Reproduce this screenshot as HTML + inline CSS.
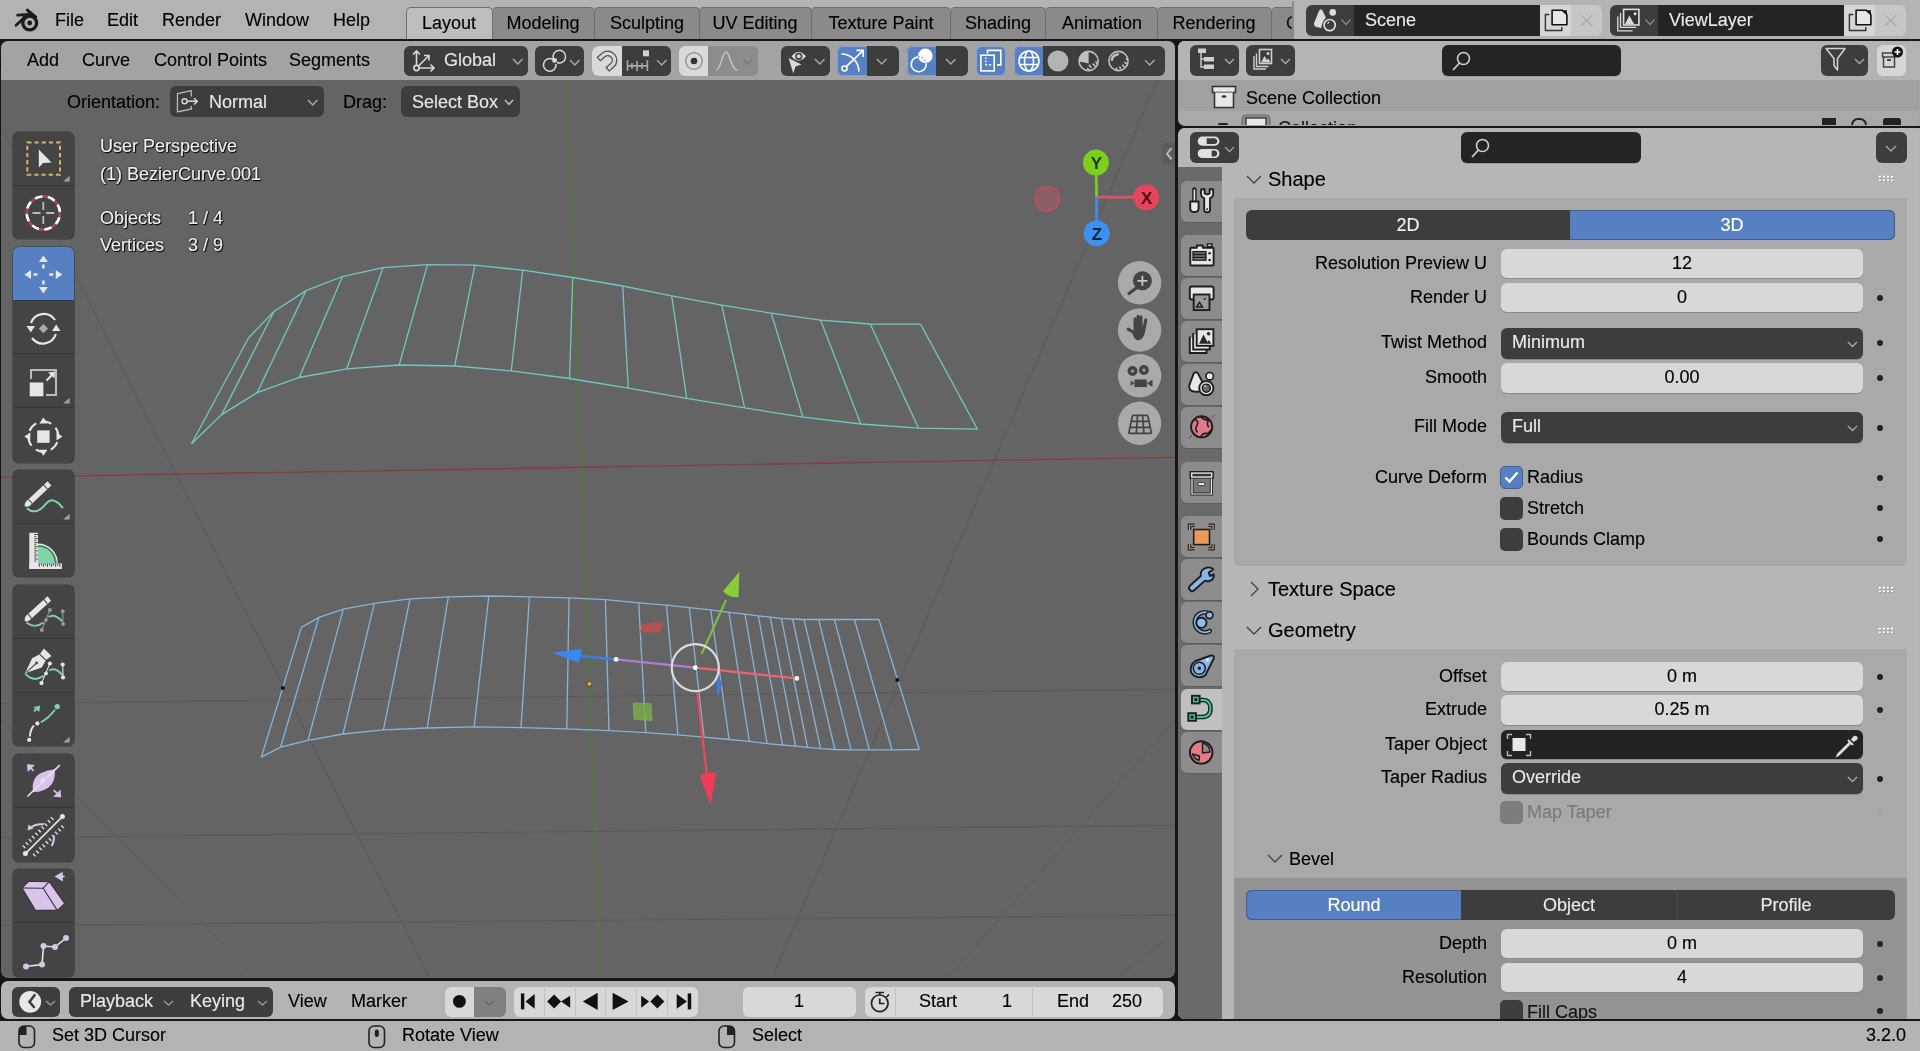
<!DOCTYPE html>
<html><head><meta charset="utf-8">
<style>
*{box-sizing:border-box;margin:0;padding:0}
html,body{width:1920px;height:1051px;overflow:hidden;background:#161616;font-family:"Liberation Sans",sans-serif;font-size:18px;color:#000}
.a{position:absolute}
.t{position:absolute;white-space:pre;line-height:1;will-change:transform;-webkit-text-stroke:0.15px currentColor}
svg{overflow:visible}
</style></head><body>
<div class="a" style="left:0.00px;top:0.00px;width:1920.00px;height:39.00px;background:#b3b3b3;border-radius:0;"></div>
<svg class="a" style="left:10px;top:5px;" width="35" height="30" viewBox="0 0 35 30"><g stroke="#1c1c1c" stroke-linecap="round" fill="none"><circle cx="19.7" cy="18" r="6.9" stroke-width="3.3"/><path d="M17.3 5.2 L25.8 12.2" stroke-width="3"/><path d="M7.6 10.1 L19.4 9.3" stroke-width="2.8"/><path d="M6.1 20.2 L13.6 13.2" stroke-width="2.8"/></g><path d="M13.5 9.6 L20 8.3 L26.5 12.5 L22 11.6 Q17 12.3 13.6 15.5 L12.3 13.2 Z" fill="#1c1c1c"/><circle cx="19.7" cy="18" r="2.4" fill="#1c1c1c"/></svg>
<div class="t" style="left:54.5px;top:11.26px;font-size:18px;color:#000;">File</div>
<div class="t" style="left:106.5px;top:11.26px;font-size:18px;color:#000;">Edit</div>
<div class="t" style="left:161.5px;top:11.26px;font-size:18px;color:#000;">Render</div>
<div class="t" style="left:244.5px;top:11.26px;font-size:18px;color:#000;">Window</div>
<div class="t" style="left:333.0px;top:11.26px;font-size:18px;color:#000;">Help</div>
<div class="a" style="left:0;top:0;width:1293px;height:39px;overflow:hidden">
<div class="a" style="left:406.00px;top:7.00px;width:86.50px;height:33.00px;background:#bdbdbd;border-radius:5px 5px 0 0;border:1.6px solid #6e6e6e;border-bottom:none;"></div>
<div class="t" style="left:249.2px;width:400px;text-align:center;top:13.56px;font-size:18px;color:#000;">Layout</div>
<div class="a" style="left:491.50px;top:7.00px;width:103.50px;height:33.00px;background:#8a8a8a;border-radius:5px 5px 0 0;border:1.6px solid #6e6e6e;border-bottom:none;"></div>
<div class="t" style="left:343.2px;width:400px;text-align:center;top:13.56px;font-size:18px;color:#000;">Modeling</div>
<div class="a" style="left:594.00px;top:7.00px;width:105.50px;height:33.00px;background:#8a8a8a;border-radius:5px 5px 0 0;border:1.6px solid #6e6e6e;border-bottom:none;"></div>
<div class="t" style="left:446.8px;width:400px;text-align:center;top:13.56px;font-size:18px;color:#000;">Sculpting</div>
<div class="a" style="left:698.50px;top:7.00px;width:113.50px;height:33.00px;background:#8a8a8a;border-radius:5px 5px 0 0;border:1.6px solid #6e6e6e;border-bottom:none;"></div>
<div class="t" style="left:555.2px;width:400px;text-align:center;top:13.56px;font-size:18px;color:#000;">UV Editing</div>
<div class="a" style="left:811.00px;top:7.00px;width:140.00px;height:33.00px;background:#8a8a8a;border-radius:5px 5px 0 0;border:1.6px solid #6e6e6e;border-bottom:none;"></div>
<div class="t" style="left:681.0px;width:400px;text-align:center;top:13.56px;font-size:18px;color:#000;">Texture Paint</div>
<div class="a" style="left:950.00px;top:7.00px;width:96.00px;height:33.00px;background:#8a8a8a;border-radius:5px 5px 0 0;border:1.6px solid #6e6e6e;border-bottom:none;"></div>
<div class="t" style="left:798.0px;width:400px;text-align:center;top:13.56px;font-size:18px;color:#000;">Shading</div>
<div class="a" style="left:1045.00px;top:7.00px;width:113.00px;height:33.00px;background:#8a8a8a;border-radius:5px 5px 0 0;border:1.6px solid #6e6e6e;border-bottom:none;"></div>
<div class="t" style="left:901.5px;width:400px;text-align:center;top:13.56px;font-size:18px;color:#000;">Animation</div>
<div class="a" style="left:1157.00px;top:7.00px;width:114.50px;height:33.00px;background:#8a8a8a;border-radius:5px 5px 0 0;border:1.6px solid #6e6e6e;border-bottom:none;"></div>
<div class="t" style="left:1014.2px;width:400px;text-align:center;top:13.56px;font-size:18px;color:#000;">Rendering</div>
<div class="a" style="left:1270.50px;top:7.00px;width:29.50px;height:33.00px;background:#8a8a8a;border-radius:5px 5px 0 0;border:1.6px solid #6e6e6e;border-bottom:none;"></div>
<div class="a" style="left:1271.5px;top:0;width:21.5px;height:39px;overflow:hidden">
<div class="t" style="left:14px;top:13.56px;font-size:18px;color:#111">Compositing</div></div>
</div>
<div class="a" style="left:1292.30px;top:1.00px;width:1.70px;height:38.00px;background:#8a8a8a;border-radius:0;"></div>
<div class="a" style="left:1305.75px;top:5.00px;width:295.95px;height:30.50px;background:#c6c6c6;border-radius:6px;"></div>
<div class="a" style="left:1305.75px;top:5.00px;width:48.25px;height:30.50px;background:#3d3d3d;border-radius:6px 0 0 6px;"></div>
<div class="a" style="left:1354.00px;top:5.00px;width:186.00px;height:30.50px;background:#242424;border-radius:0;"></div>
<div class="a" style="left:1540.00px;top:5.00px;width:31.20px;height:30.50px;background:#d6d6d6;border-radius:0;"></div>
<div class="t" style="left:1365.0px;top:11.46px;font-size:18px;color:#e8e8e8;">Scene</div>
<svg class="a" style="left:1540px;top:5px;" width="31" height="31" viewBox="0 0 31 31"><path d="M9.3 9.5 H5.4 V25.5 H21.8 V22" fill="none" stroke="#333" stroke-width="1.4"/><path d="M12.1 5.2 H22.2 L26.9 9.5 V19.7 H12.1Z" fill="#e6e6e6" stroke="#111" stroke-width="1.6" stroke-linejoin="round"/><path d="M21.5 5.2 L26.9 10.2 V5.2Z" fill="#111"/></svg>
<svg class="a" style="left:1571.2px;top:5px;" width="31" height="31" viewBox="0 0 31 31"><path d="M9.8 9.9 L21.5 21.2 M21.5 9.9 L9.8 21.2" stroke="#a8a8a8" stroke-width="1.2"/></svg>
<svg class="a" style="left:1339.5px;top:5px;" width="12" height="31" viewBox="0 0 12 31"><path d="M1.5 14.5 L6 19.5 L10.5 14.5" fill="none" stroke="#8a8a8a" stroke-width="1.3"/></svg>
<svg class="a" style="left:1305.75px;top:5px;" width="30" height="31" viewBox="0 0 30 31"><path d="M14.85 4.3 Q13.5 4.3 12.5 7 L8.3 17.5 Q7.2 21 10.5 22 L15.2 22.9 Q16 17 19.9 12.6 L16.9 6.5 Q16.2 4.3 14.85 4.3Z" fill="#dcdcdc"/><circle cx="26.75" cy="7.4" r="3.3" fill="#dcdcdc"/><circle cx="23.65" cy="20.1" r="5.6" fill="#3d3d3d" stroke="#dcdcdc" stroke-width="1.7"/><path d="M21.5 18.5 L23 17" stroke="#dcdcdc" stroke-width="1.2"/></svg>
<div class="a" style="left:1610.00px;top:5.00px;width:296.00px;height:30.50px;background:#c6c6c6;border-radius:6px;"></div>
<div class="a" style="left:1610.00px;top:5.00px;width:48.00px;height:30.50px;background:#3d3d3d;border-radius:6px 0 0 6px;"></div>
<div class="a" style="left:1658.00px;top:5.00px;width:185.80px;height:30.50px;background:#242424;border-radius:0;"></div>
<div class="a" style="left:1843.80px;top:5.00px;width:30.80px;height:30.50px;background:#d6d6d6;border-radius:0;"></div>
<div class="t" style="left:1669.0px;top:11.46px;font-size:18px;color:#e8e8e8;">ViewLayer</div>
<svg class="a" style="left:1843.8px;top:5px;" width="31" height="31" viewBox="0 0 31 31"><path d="M9.3 9.5 H5.4 V25.5 H21.8 V22" fill="none" stroke="#333" stroke-width="1.4"/><path d="M12.1 5.2 H22.2 L26.9 9.5 V19.7 H12.1Z" fill="#e6e6e6" stroke="#111" stroke-width="1.6" stroke-linejoin="round"/><path d="M21.5 5.2 L26.9 10.2 V5.2Z" fill="#111"/></svg>
<svg class="a" style="left:1874.6px;top:5px;" width="31" height="31" viewBox="0 0 31 31"><path d="M9.8 9.9 L21.5 21.2 M21.5 9.9 L9.8 21.2" stroke="#a8a8a8" stroke-width="1.2"/></svg>
<svg class="a" style="left:1643.5px;top:5px;" width="12" height="31" viewBox="0 0 12 31"><path d="M1.5 14.5 L6 19.5 L10.5 14.5" fill="none" stroke="#8a8a8a" stroke-width="1.3"/></svg>
<svg class="a" style="left:1610px;top:5px;" width="30" height="31" viewBox="0 0 30 31"><path d="M7.8 11.5 V25.9 H22.6" fill="none" stroke="#dcdcdc" stroke-width="1.3"/><path d="M10.5 8 V22.4 H26.1" fill="none" stroke="#dcdcdc" stroke-width="1.3"/><rect x="13.6" y="4.4" width="15.3" height="15.6" fill="#333" stroke="#dcdcdc" stroke-width="1.6"/><path d="M15 19.2 L19.3 10.5 L23.5 18 L24.5 19.2Z" fill="#dcdcdc"/><circle cx="25.1" cy="8.7" r="1.5" fill="#dcdcdc"/></svg>
<div class="a" style="left:1.00px;top:41.00px;width:1174.00px;height:937.00px;background:#646464;border-radius:7px;"></div>
<div class="a" style="left:1.00px;top:41.00px;width:1174.00px;height:39.00px;background:#a3a3a3;border-radius:7px 7px 0 0;"></div>
<div class="a" style="left:1178.00px;top:41.00px;width:742.00px;height:85.00px;background:#a5a5a5;border-radius:7px 0 0 7px;"></div>
<div class="a" style="left:1178.00px;top:41.00px;width:742.00px;height:39.00px;background:#b3b3b3;border-radius:7px 0 0 0;"></div>
<div class="a" style="left:1178.00px;top:128.00px;width:742.00px;height:891.00px;background:#b3b3b3;border-radius:7px 0 0 7px;"></div>
<div class="a" style="left:1.00px;top:981.00px;width:1174.00px;height:38.00px;background:#b3b3b3;border-radius:7px;"></div>
<div class="a" style="left:0.00px;top:1021.00px;width:1920.00px;height:30.00px;background:#b3b3b3;border-radius:0;"></div>
<div class="t" style="left:-4.5px;top:50.86px;font-size:18px;color:#000;">t</div>
<div class="t" style="left:26.5px;top:50.86px;font-size:18px;color:#000;">Add</div>
<div class="t" style="left:81.5px;top:50.86px;font-size:18px;color:#000;">Curve</div>
<div class="t" style="left:153.5px;top:50.86px;font-size:18px;color:#000;">Control Points</div>
<div class="t" style="left:288.5px;top:50.86px;font-size:18px;color:#000;">Segments</div>
<div class="a" style="left:404.00px;top:45.50px;width:124.00px;height:30.00px;background:#3d3d3d;border-radius:6px;"></div>
<svg class="a" style="left:404px;top:45.5px;" width="40" height="30" viewBox="0 0 40 30"><g stroke="#d9d9d9" stroke-width="1.6" fill="none"><path d="M12.5 22 V5 M9 8.5 L12.5 5 L16 8.5"/><path d="M12.5 22 H30 M26.5 18.5 L30 22 L26.5 25.5"/><path d="M12.5 22 L25 9.5 M20 9.5 H25 V14.5"/><circle cx="12.5" cy="22" r="2.6" fill="#3d3d3d"/></g></svg>
<div class="t" style="left:443.5px;top:50.96px;font-size:18px;color:#e6e6e6;">Global</div>
<svg class="a" style="left:511.5px;top:57.5px;" width="11.5" height="7" viewBox="0 0 11.5 7"><path d="M1 1 L5.75 6 L10.5 1" fill="none" stroke="#a8a8a8" stroke-width="1.4"/></svg>
<div class="a" style="left:535.00px;top:45.50px;width:49.00px;height:30.00px;background:#3d3d3d;border-radius:6px;"></div>
<svg class="a" style="left:535px;top:45.5px;" width="49" height="30" viewBox="0 0 49 30"><g stroke="#d9d9d9" stroke-width="1.5" fill="none"><path d="M18 13.5 A6.3 6.3 0 1 0 21 18"/><path d="M18.5 13 A6.3 6.3 0 1 1 22 16.5"/></g><circle cx="19.6" cy="14.4" r="2.4" fill="#d9d9d9"/></svg>
<svg class="a" style="left:569px;top:58.5px;" width="11.5" height="7" viewBox="0 0 11.5 7"><path d="M1 1 L5.75 6 L10.5 1" fill="none" stroke="#a8a8a8" stroke-width="1.4"/></svg>
<div class="a" style="left:591.50px;top:45.50px;width:79.50px;height:30.00px;background:#3d3d3d;border-radius:6px;"></div>
<div class="a" style="left:591.50px;top:45.50px;width:30.00px;height:30.00px;background:#d9d9d9;border-radius:6px 0 0 6px;"></div>
<svg class="a" style="left:591.5px;top:45.5px;" width="30" height="30" viewBox="0 0 30 30"><path d="M6.9 13 L11.4 9.1 A6.7 6.7 0 0 1 20.2 19.3 L15.7 23.2" fill="none" stroke="#555" stroke-width="5.8"/><path d="M6.9 13 L11.4 9.1 A6.7 6.7 0 0 1 20.2 19.3 L15.7 23.2" fill="none" stroke="#d9d9d9" stroke-width="3.2" transform="translate(0,0)"/><path d="M5 10.8 L8.8 15.2 M13.8 21 L17.6 25.4" stroke="#555" stroke-width="1.3"/></svg>
<svg class="a" style="left:621.5px;top:45.5px;" width="36" height="30" viewBox="0 0 36 30"><g stroke="#aaa" stroke-width="1.6" fill="none"><path d="M5.5 14 V25 M5.5 19.9 H25.4 M25.4 14 V25 M10 17 V23 M15 15 V25 M20 17 V23"/></g><rect x="21" y="4.3" width="6" height="6" fill="#d0d0d0"/></svg>
<svg class="a" style="left:656px;top:58.5px;" width="11.5" height="7" viewBox="0 0 11.5 7"><path d="M1 1 L5.75 6 L10.5 1" fill="none" stroke="#a8a8a8" stroke-width="1.4"/></svg>
<div class="a" style="left:678.50px;top:45.50px;width:79.50px;height:30.00px;background:#8c8c8c;border-radius:6px;"></div>
<div class="a" style="left:678.50px;top:45.50px;width:29.50px;height:30.00px;background:#d9d9d9;border-radius:6px 0 0 6px;"></div>
<svg class="a" style="left:678.5px;top:45.5px;" width="30" height="30" viewBox="0 0 30 30"><circle cx="15" cy="15" r="8.3" fill="none" stroke="#8a8a8a" stroke-width="1.3"/><circle cx="15" cy="15" r="3.3" fill="#333"/></svg>
<svg class="a" style="left:708px;top:45.5px;" width="50" height="30" viewBox="0 0 50 30"><path d="M8 24.5 C13 24 14 6 18 6 C22 6 23 24 29.5 24.5" fill="none" stroke="#c6c6c6" stroke-width="1.5"/></svg>
<svg class="a" style="left:742px;top:57.5px;" width="11.5" height="7" viewBox="0 0 11.5 7"><path d="M1 1 L5.75 6 L10.5 1" fill="none" stroke="#7a7a7a" stroke-width="1.4"/></svg>
<div class="a" style="left:781.00px;top:45.50px;width:49.00px;height:30.00px;background:#3d3d3d;border-radius:6px;"></div>
<svg class="a" style="left:781px;top:45.5px;" width="49" height="30" viewBox="0 0 49 30"><path d="M10.5 10.3 Q17.5 1.5 25 10.3 Q17.5 19 10.5 10.3 Z" fill="#d9d9d9"/><circle cx="17.8" cy="10.3" r="3.6" fill="#3d3d3d"/><circle cx="17.8" cy="10.3" r="2" fill="#d9d9d9"/><path d="M7.5 12 L20.5 18.5 L14.5 20.5 L12.3 27.5 Z" fill="#d9d9d9"/></svg>
<svg class="a" style="left:814px;top:57.5px;" width="11.5" height="7" viewBox="0 0 11.5 7"><path d="M1 1 L5.75 6 L10.5 1" fill="none" stroke="#a8a8a8" stroke-width="1.4"/></svg>
<div class="a" style="left:837.00px;top:45.50px;width:62.00px;height:30.00px;background:#3d3d3d;border-radius:6px;"></div>
<div class="a" style="left:837.00px;top:45.50px;width:30.00px;height:30.00px;background:#5680c2;border-radius:6px 0 0 6px;border:1px solid #87a3d3;border-right:none"></div>
<svg class="a" style="left:837px;top:45.5px;" width="30" height="30" viewBox="0 0 30 30"><g stroke="#fff" stroke-width="1.6" fill="none"><path d="M4.4 8 A17.5 17.5 0 0 1 21.9 25.5"/><path d="M9.3 20.6 L26.2 4.4 M19.5 4.4 H26.2 V11"/><circle cx="7.5" cy="22.5" r="2.5"/></g></svg>
<svg class="a" style="left:875.5px;top:57.5px;" width="11.5" height="7" viewBox="0 0 11.5 7"><path d="M1 1 L5.75 6 L10.5 1" fill="none" stroke="#a8a8a8" stroke-width="1.4"/></svg>
<div class="a" style="left:906.50px;top:45.50px;width:61.50px;height:30.00px;background:#3d3d3d;border-radius:6px;"></div>
<div class="a" style="left:906.50px;top:45.50px;width:29.50px;height:30.00px;background:#5680c2;border-radius:6px 0 0 6px;border:1px solid #87a3d3;border-right:none"></div>
<svg class="a" style="left:906.5px;top:45.5px;" width="30" height="30" viewBox="0 0 30 30"><circle cx="18.3" cy="9.8" r="7.3" fill="#fff"/><path d="M11.07 10.83 A7.5 7.5 0 1 0 19.1 17.06" fill="none" stroke="#fff" stroke-width="1.6"/><path d="M11.07 10.83 A7.5 7.5 0 0 1 19.1 17.06" fill="none" stroke="#5680c2" stroke-width="1.2" stroke-dasharray="1.6 1.8"/></svg>
<svg class="a" style="left:944.5px;top:57.5px;" width="11.5" height="7" viewBox="0 0 11.5 7"><path d="M1 1 L5.75 6 L10.5 1" fill="none" stroke="#a8a8a8" stroke-width="1.4"/></svg>
<div class="a" style="left:975.50px;top:45.50px;width:30.00px;height:30.00px;background:#5680c2;border-radius:6px;border:1px solid #87a3d3"></div>
<svg class="a" style="left:975.5px;top:45.5px;" width="30" height="30" viewBox="0 0 30 30"><path d="M11.5 7.5 V4.4 H24.8 V18.9 H21" fill="none" stroke="#fff" stroke-width="1.6"/><rect x="4.9" y="9.2" width="13.3" height="15.7" fill="none" stroke="#fff" stroke-width="1.6"/><path d="M9.8 11.6 V13 M9.8 14.6 V16.3 M9.8 17.8 V18.9 H11.2 M12.8 18.9 H15.3" fill="none" stroke="#fff" stroke-width="1.4"/></svg>
<div class="a" style="left:1013.50px;top:45.50px;width:151.00px;height:30.00px;background:#3d3d3d;border-radius:6px;"></div>
<div class="a" style="left:1013.50px;top:45.50px;width:29.50px;height:30.00px;background:#5680c2;border-radius:6px 0 0 6px;border:1px solid #87a3d3;border-right:none"></div>
<svg class="a" style="left:1013.5px;top:45.5px;" width="30" height="30" viewBox="0 0 30 30"><g fill="none" stroke="#fff" stroke-width="1.6"><circle cx="15" cy="15" r="10"/><ellipse cx="15" cy="15" rx="4.5" ry="10"/><path d="M5.5 11.5 H24.5 M5.5 18.5 H24.5"/></g></svg>
<div class="a" style="left:1073.00px;top:48.50px;width:0.80px;height:24.00px;background:#414141;border-radius:0;"></div>
<div class="a" style="left:1103.00px;top:48.50px;width:0.80px;height:24.00px;background:#414141;border-radius:0;"></div>
<div class="a" style="left:1133.00px;top:48.50px;width:0.80px;height:24.00px;background:#414141;border-radius:0;"></div>
<svg class="a" style="left:1043px;top:45.5px;" width="30" height="30" viewBox="0 0 30 30"><circle cx="15" cy="15" r="10.5" fill="#b3b3b3"/></svg>
<svg class="a" style="left:1073px;top:45.5px;" width="30" height="30" viewBox="0 0 30 30"><circle cx="15.6" cy="15" r="9.6" fill="none" stroke="#c0c0c0" stroke-width="1.6"/><path d="M15.6 17.5 V5.4 A9.6 9.6 0 0 0 6.1 15.6 Z" fill="#c0c0c0"/><path d="M15.9 18.9 L18.5 21.8 M19.6 17.5 L22.2 20.4 M22.5 15.6 L24.3 17.8 M14.1 22.2 L16.3 24" stroke="#c0c0c0" stroke-width="1.6"/></svg>
<svg class="a" style="left:1103px;top:45.5px;" width="30" height="30" viewBox="0 0 30 30"><circle cx="15.5" cy="15" r="9.6" fill="none" stroke="#c0c0c0" stroke-width="1.6"/><path d="M8.9 13.8 Q9.5 9.5 14.8 8.3" stroke="#c0c0c0" stroke-width="2.6" fill="none" stroke-linecap="round"/><path d="M12.6 21.8 L14.4 23.7 M16.2 20.7 L18 22.6 M19.1 18.9 L21.7 21.1 M21.3 16 L23.9 18.2 M22.8 12.4 L24.6 13.8" stroke="#c0c0c0" stroke-width="1.6"/></svg>
<svg class="a" style="left:1143.5px;top:58.5px;" width="11.5" height="7" viewBox="0 0 11.5 7"><path d="M1 1 L5.75 6 L10.5 1" fill="none" stroke="#a8a8a8" stroke-width="1.4"/></svg>
<div class="t" style="left:66.5px;top:92.66px;font-size:18px;color:#000;">Orientation:</div>
<div class="a" style="left:169.50px;top:86.00px;width:154.50px;height:30.50px;background:#3d3d3d;border-radius:6px;"></div>
<svg class="a" style="left:169.5px;top:86px;" width="36" height="30" viewBox="0 0 36 30"><path d="M21.3 10.5 V4.7 L7.45 7.6 V25.9 L21.3 23 V20.1" fill="none" stroke="#bbb" stroke-width="1.3" stroke-linejoin="round"/><circle cx="14.6" cy="15.3" r="2.5" fill="none" stroke="#d9d9d9" stroke-width="1.4"/><path d="M17.1 15.3 H27.3 M24 12.2 L27.3 15.3 L24 18.4" fill="none" stroke="#d9d9d9" stroke-width="1.4"/></svg>
<div class="t" style="left:208.5px;top:92.66px;font-size:18px;color:#e6e6e6;">Normal</div>
<svg class="a" style="left:307px;top:98.5px;" width="11.5" height="7" viewBox="0 0 11.5 7"><path d="M1 1 L5.75 6 L10.5 1" fill="none" stroke="#a8a8a8" stroke-width="1.4"/></svg>
<div class="t" style="left:342.5px;top:92.66px;font-size:18px;color:#000;">Drag:</div>
<div class="a" style="left:401.00px;top:86.00px;width:119.00px;height:30.50px;background:#3d3d3d;border-radius:6px;"></div>
<div class="t" style="left:412.0px;top:92.66px;font-size:18px;color:#e6e6e6;">Select Box</div>
<svg class="a" style="left:504px;top:98.5px;" width="10" height="6.5" viewBox="0 0 10 6.5"><path d="M1 1 L5.0 5.5 L9 1" fill="none" stroke="#c8c8c8" stroke-width="1.4"/></svg>
<svg class="a" style="left:0;top:0;overflow:hidden;clip-path:inset(80px 1px 73px 1px round 0 0 7px 7px)" width="1176" height="1051" viewBox="0 0 1176 1051"><line x1="0" y1="123" x2="429.2" y2="977.2" stroke="#5a5a5a" stroke-width="1"/><line x1="0" y1="718.4" x2="255.6" y2="977.2" stroke="#5a5a5a" stroke-width="1"/><line x1="0" y1="703.6" x2="1175" y2="689.2" stroke="#5a5a5a" stroke-width="1"/><line x1="0" y1="837.6" x2="1175" y2="825.3" stroke="#5a5a5a" stroke-width="1"/><line x1="0" y1="925.5" x2="1175" y2="915.3" stroke="#5a5a5a" stroke-width="1"/><line x1="1174.2" y1="41" x2="772.6" y2="977" stroke="#5a5a5a" stroke-width="1"/><line x1="1174.3" y1="720" x2="948.3" y2="977" stroke="#5a5a5a" stroke-width="1"/><line x1="1174.3" y1="933.2" x2="1117.8" y2="977" stroke="#5a5a5a" stroke-width="1"/><line x1="0" y1="477.1" x2="1175" y2="457.3" stroke="#8a3b42" stroke-width="1.3"/><line x1="564.7" y1="41" x2="600.5" y2="977" stroke="#4e7d2c" stroke-width="1.3"/><polyline points="248.8,337.5 274.0,311.5 306.0,290.6 342.5,276.5 383.0,267.7 427.5,264.6 474.8,265.2 522.7,270.2 572.7,277.5 622.7,286.0 671.7,295.8 721.7,305.2 771.2,313.1 820.6,320.2 870.2,324.0 920.6,324.2" fill="none" stroke="#73c6c6" stroke-width="1.3"/><polyline points="191.5,443.8 221.7,414.6 257.1,392.7 299.2,377.5 346.7,368.8 399.2,365.0 454.6,366.0 511.2,370.8 569.6,378.5 628.3,388.1 686.7,398.3 744.6,407.9 802.9,417.1 860.8,424.0 918.5,428.1 977.5,429.2" fill="none" stroke="#73c6c6" stroke-width="1.3"/><line x1="248.75" y1="337.5" x2="191.5" y2="443.75" stroke="#73c6c6" stroke-width="1.3"/><line x1="274.0" y1="311.5" x2="221.7" y2="414.6" stroke="#73c6c6" stroke-width="1.3"/><line x1="306" y1="290.6" x2="257.1" y2="392.7" stroke="#73c6c6" stroke-width="1.3"/><line x1="342.5" y1="276.5" x2="299.2" y2="377.5" stroke="#73c6c6" stroke-width="1.3"/><line x1="383" y1="267.7" x2="346.7" y2="368.75" stroke="#73c6c6" stroke-width="1.3"/><line x1="427.5" y1="264.6" x2="399.2" y2="365" stroke="#73c6c6" stroke-width="1.3"/><line x1="474.8" y1="265.2" x2="454.6" y2="366" stroke="#73c6c6" stroke-width="1.3"/><line x1="522.7" y1="270.2" x2="511.25" y2="370.8" stroke="#73c6c6" stroke-width="1.3"/><line x1="572.7" y1="277.5" x2="569.6" y2="378.5" stroke="#73c6c6" stroke-width="1.3"/><line x1="622.7" y1="286" x2="628.3" y2="388.1" stroke="#73c6c6" stroke-width="1.3"/><line x1="671.7" y1="295.8" x2="686.7" y2="398.3" stroke="#73c6c6" stroke-width="1.3"/><line x1="721.7" y1="305.2" x2="744.6" y2="407.9" stroke="#73c6c6" stroke-width="1.3"/><line x1="771.25" y1="313.1" x2="802.9" y2="417.1" stroke="#73c6c6" stroke-width="1.3"/><line x1="820.6" y1="320.2" x2="860.8" y2="424" stroke="#73c6c6" stroke-width="1.3"/><line x1="870.2" y1="324" x2="918.5" y2="428.1" stroke="#73c6c6" stroke-width="1.3"/><line x1="920.6" y1="324.2" x2="977.5" y2="429.2" stroke="#73c6c6" stroke-width="1.3"/><polyline points="301.4,627.4 318.9,617.4 343.3,609.2 374.3,603.3 410.0,598.8 448.3,596.8 488.8,596.0 529.4,596.8 569.0,597.9 605.4,599.7 638.7,602.8 666.5,605.2 689.3,607.6 710.7,609.9 729.0,612.3 745.0,614.2 758.3,615.9 770.2,617.1 781.4,618.3 792.6,619.0 804.0,619.5 818.7,619.5 834.4,619.5 854.4,619.5 878.9,619.5" fill="none" stroke="#86b3d9" stroke-width="1.3"/><polyline points="261.3,757.2 280.6,747.2 308.0,740.4 343.0,734.0 383.4,729.8 427.2,728.0 474.2,726.9 521.0,727.6 566.8,728.9 609.0,730.7 645.8,732.6 677.9,734.8 704.1,737.2 729.1,739.5 749.3,741.4 767.1,743.6 782.6,745.0 795.6,746.2 807.5,747.4 820.6,748.6 834.9,749.5 851.0,749.8 869.4,749.8 892.0,749.8 919.3,749.5" fill="none" stroke="#86b3d9" stroke-width="1.3"/><line x1="301.4" y1="627.4" x2="261.3" y2="757.2" stroke="#86b3d9" stroke-width="1.3"/><line x1="318.9" y1="617.4" x2="280.6" y2="747.2" stroke="#86b3d9" stroke-width="1.3"/><line x1="343.3" y1="609.2" x2="308" y2="740.4" stroke="#86b3d9" stroke-width="1.3"/><line x1="374.3" y1="603.3" x2="343" y2="734" stroke="#86b3d9" stroke-width="1.3"/><line x1="410" y1="598.8" x2="383.4" y2="729.8" stroke="#86b3d9" stroke-width="1.3"/><line x1="448.3" y1="596.8" x2="427.2" y2="728" stroke="#86b3d9" stroke-width="1.3"/><line x1="488.8" y1="596" x2="474.2" y2="726.9" stroke="#86b3d9" stroke-width="1.3"/><line x1="529.4" y1="596.8" x2="521" y2="727.6" stroke="#86b3d9" stroke-width="1.3"/><line x1="569" y1="597.9" x2="566.8" y2="728.9" stroke="#86b3d9" stroke-width="1.3"/><line x1="605.4" y1="599.7" x2="609" y2="730.7" stroke="#86b3d9" stroke-width="1.3"/><line x1="638.7" y1="602.8" x2="645.8" y2="732.6" stroke="#86b3d9" stroke-width="1.3"/><line x1="666.5" y1="605.2" x2="677.9" y2="734.8" stroke="#86b3d9" stroke-width="1.3"/><line x1="689.3" y1="607.6" x2="704.1" y2="737.2" stroke="#86b3d9" stroke-width="1.3"/><line x1="710.7" y1="609.9" x2="729.1" y2="739.5" stroke="#86b3d9" stroke-width="1.3"/><line x1="729" y1="612.3" x2="749.3" y2="741.4" stroke="#86b3d9" stroke-width="1.3"/><line x1="745" y1="614.2" x2="767.1" y2="743.6" stroke="#86b3d9" stroke-width="1.3"/><line x1="758.3" y1="615.9" x2="782.6" y2="745" stroke="#86b3d9" stroke-width="1.3"/><line x1="770.2" y1="617.1" x2="795.6" y2="746.2" stroke="#86b3d9" stroke-width="1.3"/><line x1="781.4" y1="618.3" x2="807.5" y2="747.4" stroke="#86b3d9" stroke-width="1.3"/><line x1="792.6" y1="619" x2="820.6" y2="748.6" stroke="#86b3d9" stroke-width="1.3"/><line x1="804" y1="619.5" x2="834.9" y2="749.5" stroke="#86b3d9" stroke-width="1.3"/><line x1="818.7" y1="619.5" x2="851" y2="749.8" stroke="#86b3d9" stroke-width="1.3"/><line x1="834.4" y1="619.5" x2="869.4" y2="749.8" stroke="#86b3d9" stroke-width="1.3"/><line x1="854.4" y1="619.5" x2="892" y2="749.8" stroke="#86b3d9" stroke-width="1.3"/><line x1="878.9" y1="619.5" x2="919.3" y2="749.5" stroke="#86b3d9" stroke-width="1.3"/><circle cx="282.8" cy="687.9" r="2" fill="#111"/><circle cx="897.2" cy="680.1" r="2" fill="#111"/><circle cx="589.4" cy="683.8" r="2.5" fill="#f0a040" stroke="#222" stroke-width="0.6"/><path d="M642.3 624 L663.7 621.8 L660 632.5 L639.5 632.5Z" fill="#c05050" opacity="0.85"/><path d="M633.2 702.7 L651 703.7 L652.2 720.5 L634 719.5Z" fill="#7aa84a" opacity="0.85" stroke="#8cc05a" stroke-width="0.6"/><path d="M716 676 Q722 680 722 684 L718 697 Q716 690 716 676Z" fill="#4a7ad0"/><line x1="695.3" y1="667.7" x2="616.1" y2="659.4" stroke="#b07ad8" stroke-width="2.2"/><line x1="616.1" y1="659.4" x2="580" y2="656" stroke="#3a7fe8" stroke-width="2.4"/><path d="M551.9 652.7 L581.6 648.8 L579.2 663Z" fill="#3a88ee"/><line x1="695.3" y1="667.7" x2="796.8" y2="678.4" stroke="#f0606e" stroke-width="2.2"/><line x1="701.7" y1="653.9" x2="726" y2="600" stroke="#7ac040" stroke-width="2.2"/><path d="M739.3 571.9 L723.1 591 Q728 598 738.6 597Z" fill="#88cc38"/><line x1="697" y1="690.8" x2="707" y2="776" stroke="#e84a60" stroke-width="2.2"/><path d="M710.7 805 L699.8 775.5 Q708 771 716.2 773Z" fill="#f03c58"/><circle cx="695.3" cy="667.7" r="23.5" fill="none" stroke="#dcdcdc" stroke-width="2.2"/><circle cx="695.3" cy="667.7" r="2.4" fill="#fff"/><circle cx="616.1" cy="659.4" r="2.4" fill="#fff"/><circle cx="796.8" cy="678.4" r="2.4" fill="#fff"/><circle cx="1047.2" cy="198.7" r="12.2" fill="#9a5c66" stroke="#d84a62" stroke-width="1.6" opacity="0.8"/><line x1="1096.6" y1="197.2" x2="1096" y2="162.6" stroke="#7ac828" stroke-width="2.8"/><line x1="1096.6" y1="197.2" x2="1146.1" y2="197.2" stroke="#e0506a" stroke-width="2.8"/><line x1="1096.6" y1="197.2" x2="1096.6" y2="233.4" stroke="#3c8ee6" stroke-width="2.8"/><circle cx="1095.9" cy="162.6" r="13" fill="#7ccf1c"/><circle cx="1146.1" cy="197.2" r="13" fill="#e8445e"/><circle cx="1096.6" cy="233.4" r="13" fill="#3e90ee"/><text x="1096.3" y="168.9" text-anchor="middle" font-family="Liberation Sans" font-weight="bold" font-size="17" fill="#1c3a04">Y</text><text x="1146.6" y="203.5" text-anchor="middle" font-family="Liberation Sans" font-weight="bold" font-size="17" fill="#4e0c16">X</text><text x="1097" y="239.70000000000002" text-anchor="middle" font-family="Liberation Sans" font-weight="bold" font-size="17" fill="#08264e">Z</text><circle cx="1139.6" cy="282.8" r="21.7" fill="#a9a9a9"/><circle cx="1139.6" cy="330" r="21.7" fill="#a9a9a9"/><circle cx="1139.6" cy="375.7" r="21.7" fill="#a9a9a9"/><circle cx="1139.6" cy="423.2" r="21.7" fill="#a9a9a9"/><path d="M1167 143 H1176 V164.5 H1167 Q1162 164.5 1162 160 V147.5 Q1162 143 1167 143 Z" fill="#5c5c5c"/><path d="M1171.5 148 L1167 153.7 L1171.5 159.4" fill="none" stroke="#bbb" stroke-width="1.9"/></svg>
<svg class="a" style="left:1117.9px;top:261.1px;" width="44" height="44" viewBox="0 0 44 44"><circle cx="24.4" cy="19.8" r="9.5" fill="#444444"/><path d="M24.4 14.8 V24.8 M19.4 19.8 H29.4" stroke="#c8c8c8" stroke-width="1.8"/><path d="M19 26.5 L11 32.5" stroke="#444444" stroke-width="3.2" stroke-linecap="round"/></svg>
<svg class="a" style="left:1117.9px;top:308.3px;" width="44" height="44" viewBox="0 0 44 44"><path d="M14.5 25.5 L9.5 22.5 Q8 21.3 9 20.2 Q10.2 19 11.8 20.2 L15.5 22.5 V11 Q15.5 9.3 17 9.3 Q18.5 9.3 18.5 11 V19 V8.3 Q18.5 6.8 20 6.8 Q21.5 6.8 21.5 8.3 V19 V8.8 Q21.5 7.3 23 7.3 Q24.5 7.3 24.5 8.8 V19.5 L26.3 11.5 Q26.8 10 28.3 10.4 Q29.7 10.9 29.3 12.4 L27.2 23 Q26 31 20.5 32.3 Q16.5 32.5 14.5 25.5Z" fill="#444444"/></svg>
<svg class="a" style="left:1117.9px;top:354px;" width="44" height="44" viewBox="0 0 44 44"><circle cx="14.5" cy="17" r="5" fill="#444444"/><circle cx="25.9" cy="16" r="5" fill="#444444"/><circle cx="14.5" cy="17" r="1.5" fill="#aaa"/><circle cx="25.9" cy="16" r="1.5" fill="#aaa"/><rect x="16.4" y="25.5" width="12.4" height="7.6" fill="#444444"/><path d="M28.8 29.3 L34.5 25.5 V33.1Z" fill="#444444"/><path d="M13.5 27 V31.5 M13.5 29.3 H16.4" stroke="#444444" stroke-width="1.6"/></svg>
<svg class="a" style="left:1117.9px;top:401.5px;" width="44" height="44" viewBox="0 0 44 44"><path d="M14.5 13.3 H29.7 M13.2 19.3 H31.0 M12.0 25.4 H32.2 M10.7 31.4 H33.5 M14.5 13.3 L10.7 31.4 M19.6 13.3 L18.3 31.4 M24.6 13.3 L25.9 31.4 M29.7 13.3 L33.5 31.4" fill="none" stroke="#444" stroke-width="1.7"/></svg>
<div class="t" style="left:99.5px;top:136.66px;font-size:18px;color:#f0f0f0;text-shadow:0 0 2px #000,1px 1px 1px #000">User Perspective</div>
<div class="t" style="left:99.5px;top:165.16px;font-size:18px;color:#f0f0f0;text-shadow:0 0 2px #000,1px 1px 1px #000">(1) BezierCurve.001</div>
<div class="t" style="left:99.5px;top:208.96px;font-size:18px;color:#f0f0f0;text-shadow:0 0 2px #000,1px 1px 1px #000">Objects</div>
<div class="t" style="left:188.0px;top:208.96px;font-size:18px;color:#f0f0f0;text-shadow:0 0 2px #000,1px 1px 1px #000">1 / 4</div>
<div class="t" style="left:99.5px;top:235.56px;font-size:18px;color:#f0f0f0;text-shadow:0 0 2px #000,1px 1px 1px #000">Vertices</div>
<div class="t" style="left:188.0px;top:235.56px;font-size:18px;color:#f0f0f0;text-shadow:0 0 2px #000,1px 1px 1px #000">3 / 9</div>
<div class="a" style="left:12.5px;top:132.3px;width:61px;height:107.0px;background:#444444;border-radius:6px;overflow:hidden;box-shadow:0 0 0 0.6px #3a3a3a">
<div class="a" style="left:0;top:52.29999999999998px;width:61px;height:1px;background:#383838"></div>
</div>
<div class="a" style="left:12.5px;top:247.2px;width:61px;height:215.8px;background:#444444;border-radius:6px;overflow:hidden;box-shadow:0 0 0 0.6px #3a3a3a">
<div class="a" style="left:0;top:0.0px;width:61px;height:53.5px;background:#5680c2"></div>
<div class="a" style="left:0;top:53.0px;width:61px;height:1px;background:#383838"></div>
<div class="a" style="left:0;top:106.30000000000001px;width:61px;height:1px;background:#383838"></div>
<div class="a" style="left:0;top:160.2px;width:61px;height:1px;background:#383838"></div>
</div>
<div class="a" style="left:12.5px;top:470px;width:61px;height:106.79999999999995px;background:#444444;border-radius:6px;overflow:hidden;box-shadow:0 0 0 0.6px #3a3a3a">
<div class="a" style="left:0;top:52.799999999999955px;width:61px;height:1px;background:#383838"></div>
</div>
<div class="a" style="left:12.5px;top:584.9px;width:61px;height:160.80000000000007px;background:#444444;border-radius:6px;overflow:hidden;box-shadow:0 0 0 0.6px #3a3a3a">
<div class="a" style="left:0;top:53.0px;width:61px;height:1px;background:#383838"></div>
<div class="a" style="left:0;top:107.10000000000002px;width:61px;height:1px;background:#383838"></div>
</div>
<div class="a" style="left:12.5px;top:754.2px;width:61px;height:107.5px;background:#444444;border-radius:6px;overflow:hidden;box-shadow:0 0 0 0.6px #3a3a3a">
<div class="a" style="left:0;top:52.89999999999998px;width:61px;height:1px;background:#383838"></div>
</div>
<div class="a" style="left:12.5px;top:869px;width:61px;height:108px;background:#444444;border-radius:6px;overflow:hidden;box-shadow:0 0 0 0.6px #3a3a3a">
<div class="a" style="left:0;top:53.39999999999998px;width:61px;height:1px;background:#383838"></div>
</div>
<svg class="a" style="left:12.5px;top:132.3px;" width="61" height="54" viewBox="0 0 61 54"><rect x="14.3" y="10.5" width="32.7" height="32.2" fill="none" stroke="#d8b26a" stroke-width="2" stroke-dasharray="4.2 3"/><path d="M25.8 17.5 L25.8 35.5 L30 31 L38.5 30.5 Z" fill="#e6e6e6"/></svg>
<svg class="a" style="left:12.5px;top:132.3px;" width="61" height="54" viewBox="0 0 61 54"><path d="M50.3 49.4 L56.6 43.7 L56.6 49.4 Z" fill="#a0a0a0"/></svg>
<svg class="a" style="left:12.5px;top:185.1px;" width="61" height="54" viewBox="0 0 61 54"><circle cx="30.3" cy="28" r="16.6" fill="none" stroke="#a24a58" stroke-width="2.6"/><circle cx="30.3" cy="28" r="16.6" fill="none" stroke="#fff" stroke-width="2.6" stroke-dasharray="7.5 5.5" transform="rotate(-30 30.3 28)"/><path d="M19.5 28 H27.5 M33.2 28 H41.2 M30.3 17.1 V25.1 M30.3 30.9 V38.9" stroke="#bbb" stroke-width="1.8"/></svg>
<svg class="a" style="left:12.5px;top:247.2px;" width="61" height="54" viewBox="0 0 61 54"><g fill="#e6e6e6"><path d="M30.4 8.6 L25.9 15 H34.9Z M30.4 46.4 L25.9 40 H34.9Z M11.5 27.5 L18 23 V32Z M49.3 27.5 L42.8 23 V32Z"/></g><path d="M30.4 17.5 V21.5 M30.4 33.5 V37.5 M20.5 27.5 H24.5 M36.3 27.5 H40.3" stroke="#e6e6e6" stroke-width="2.6"/></svg>
<svg class="a" style="left:12.5px;top:300.7px;" width="61" height="54" viewBox="0 0 61 54"><path d="M30.4 23 L35 27.6 L30.4 32.2 L25.8 27.6Z" fill="#aaa"/><path d="M18 22 A13.5 13.5 0 0 1 42 19" fill="none" stroke="#e6e6e6" stroke-width="2.2"/><path d="M42.8 33 A13.5 13.5 0 0 1 19 37" fill="none" stroke="#e6e6e6" stroke-width="2.2"/><path d="M13.5 25 H22 L17.7 31.5Z M39 30 H47.5 L43.2 23.5Z" fill="#e6e6e6"/></svg>
<svg class="a" style="left:12.5px;top:354px;" width="61" height="54" viewBox="0 0 61 54"><rect x="16.7" y="28.5" width="13.7" height="13.8" fill="#e6e6e6"/><path d="M18 25 V16 H43 V41 H33" fill="none" stroke="#bbb" stroke-width="2"/><path d="M33.5 26.5 L40 20" stroke="#e6e6e6" stroke-width="2"/><path d="M42 17.5 L41.5 24.5 L35 18.5Z" fill="#e6e6e6"/></svg>
<svg class="a" style="left:12.5px;top:354px;" width="61" height="54" viewBox="0 0 61 54"><path d="M50.3 49.4 L56.6 43.7 L56.6 49.4 Z" fill="#a0a0a0"/></svg>
<svg class="a" style="left:12.5px;top:407.9px;" width="61" height="54" viewBox="0 0 61 54"><rect x="24.2" y="22.4" width="12.4" height="12.4" fill="#e6e6e6"/><circle cx="30.4" cy="28.6" r="15" fill="none" stroke="#e6e6e6" stroke-width="2" stroke-dasharray="10 5.7" transform="rotate(22 30.4 28.6)"/><g fill="#e6e6e6"><path d="M30.4 9.5 L26.4 15.5 H34.4Z M30.4 47.7 L26.4 41.7 H34.4Z M11.3 28.6 L17.3 24.6 V32.6Z M49.5 28.6 L43.5 24.6 V32.6Z"/></g></svg>
<svg class="a" style="left:12.5px;top:470px;" width="61" height="54" viewBox="0 0 61 54"><path d="M11.7 36.2 Q11.4 33.5 12.9 31.8 L34.7 11.3 L38.3 15.4 L16.5 35.9 Q14.5 37.2 11.7 36.2Z" fill="#e6e6e6"/><path d="M15.6 29.4 L19.2 33.5 M30.8 15 L34.4 19.1" stroke="#444" stroke-width="1.1"/><path d="M13.8 38.2 Q18 42 22.9 41.2 Q28 40 33.1 33.6 Q37 29.5 40.2 30.5 Q45 31.5 49.9 38.2" fill="none" stroke="#7fd3a8" stroke-width="2"/></svg>
<svg class="a" style="left:12.5px;top:470px;" width="61" height="54" viewBox="0 0 61 54"><path d="M50.3 49.4 L56.6 43.7 L56.6 49.4 Z" fill="#a0a0a0"/></svg>
<svg class="a" style="left:12.5px;top:523.3px;" width="61" height="54" viewBox="0 0 61 54"><path d="M25 40.4 V22.1 A18.3 18.3 0 0 1 43.3 40.4Z" fill="#7fd3a8"/><path d="M25 21.2 A19.2 19.2 0 0 1 44.2 40.4" fill="none" stroke="#e6e6e6" stroke-width="1.4"/><path d="M25 23 A17.4 17.4 0 0 1 42.4 40.4" fill="none" stroke="#1f4a35" stroke-width="0.9"/><rect x="16.3" y="9.8" width="8.7" height="36.2" fill="#e6e6e6"/><rect x="16.3" y="40.4" width="32.6" height="5.6" fill="#e6e6e6"/><path d="M21.3 11.5 H24.8 M21.3 13.6 H23.3 M21.3 15.6 H24.8 M21.3 17.6 H23.3 M21.3 19.7 H24.8 M21.3 21.8 H23.3 M21.3 23.8 H24.8 M21.3 25.8 H23.3 M21.3 27.9 H24.8 M21.3 29.9 H23.3 M21.3 32.0 H24.8 M21.3 34.0 H23.3 M21.3 36.1 H24.8 M21.3 38.1 H23.3 M26.3 40.6 V43.8 M28.4 40.6 V42.5 M30.4 40.6 V43.8 M32.5 40.6 V42.5 M34.5 40.6 V43.8 M36.5 40.6 V42.5 M38.6 40.6 V43.8 M40.6 40.6 V42.5 M42.7 40.6 V43.8 M44.8 40.6 V42.5 M46.8 40.6 V43.8" stroke="#333" stroke-width="0.9"/></svg>
<svg class="a" style="left:12.5px;top:584.9px;" width="61" height="54" viewBox="0 0 61 54"><path d="M11.7 36.1 Q11.2 33 12.76 31 L34.56 11.3 L38.04 15.7 L16.24 35.4 Q14 37 11.7 36.1Z" fill="#e6e6e6"/><path d="M15.26 29.1 L18.74 33.5 M30.76 14.3 L34.24 18.7" stroke="#444" stroke-width="1.1"/><path d="M13.6 37.8 Q22 44 30.4 37.6 M35.6 32.1 Q41 28 49 36" fill="none" stroke="#7fd3a8" stroke-width="1.9"/><path d="M28.8 44.9 L36.9 25 M49.7 26.3 L50 39.1" stroke="#999" stroke-width="1.1"/><g fill="#999"><circle cx="28.8" cy="44.9" r="2"/><circle cx="36.9" cy="25" r="2"/><circle cx="33" cy="35" r="1.8"/><circle cx="49.7" cy="26.3" r="2"/><circle cx="50" cy="39.1" r="2"/></g></svg>
<svg class="a" style="left:12.5px;top:638.4px;" width="61" height="54" viewBox="0 0 61 54"><path d="M12.1 35.2 L19.1 20.3 L26.7 16.3 L33 22.1 L28.8 29.4Z" fill="#e6e6e6"/><path d="M26.7 16.3 L30.9 10.6 L38.5 17.9 L33 22.1Z" fill="#e6e6e6"/><path d="M26.7 16.3 L33 22.1 M13.6 34.2 L23.6 25" stroke="#444" stroke-width="1.1"/><circle cx="23.6" cy="25" r="1.4" fill="#444"/><path d="M12.1 35.7 Q21 45 30.4 37.8 M36.1 32.6 Q42 28.5 49.2 36.8" fill="none" stroke="#7fd3a8" stroke-width="1.9"/><path d="M28.5 45.1 L36.9 25.5 M49.7 26.5 L50 39.4" stroke="#e6e6e6" stroke-width="1.1"/><g fill="#e6e6e6"><circle cx="28.5" cy="45.1" r="2.1"/><circle cx="36.9" cy="25.5" r="2.1"/><circle cx="33" cy="35.4" r="1.9"/><circle cx="49.7" cy="26.5" r="2.1"/><circle cx="50" cy="39.4" r="2.1"/></g></svg>
<svg class="a" style="left:12.5px;top:692.5px;" width="61" height="54" viewBox="0 0 61 54"><path d="M16.8 43.5 Q17.5 36 21 32.5" fill="none" stroke="#e6e6e6" stroke-width="1.9"/><path d="M27.8 29.3 Q36 25 41.9 16.8" fill="none" stroke="#7fd3a8" stroke-width="1.9"/><circle cx="16.2" cy="46.9" r="2.1" fill="#e6e6e6"/><circle cx="24.4" cy="30.4" r="2.1" fill="#e6e6e6"/><circle cx="44.2" cy="13.6" r="2.6" fill="#7fd3a8"/><path d="M27.2 12.6 L20.4 14.2 L26.2 19.1Z" fill="#7fd3a8"/><path d="M21 18.3 L24 15.5" stroke="#7fd3a8" stroke-width="2"/></svg>
<svg class="a" style="left:12.5px;top:692.5px;" width="61" height="54" viewBox="0 0 61 54"><path d="M50.3 49.4 L56.6 43.7 L56.6 49.4 Z" fill="#a0a0a0"/></svg>
<svg class="a" style="left:12.5px;top:754.2px;" width="61" height="54" viewBox="0 0 61 54"><path d="M20 38 Q18 24 28 19 Q35 16 41.7 15.2 Q43 27 36 33 Q29 38.5 20 38Z" fill="#d9c3e8"/><path d="M14.4 42.5 L46.8 11.1" stroke="#e8def0" stroke-width="1.6"/><circle cx="29.8" cy="26.6" r="2.2" fill="#ede3f3"/><path d="M14.9 11.1 L20 11.6 L15.4 16.2Z M17.5 13.7 L20.6 16.8 M47.3 42.5 L42.2 42 L46.8 37.4Z M44.7 39.9 L40.6 36.2" fill="#d9c3e8" stroke="#d9c3e8" stroke-width="1.7"/></svg>
<svg class="a" style="left:12.5px;top:807.6px;" width="61" height="54" viewBox="0 0 61 54"><path d="M9.6 37.4 l2.6 2.6 M20.0 45.8 l2.6 2.6 M12.7 34.3 l2.6 2.6 M23.1 42.7 l2.6 2.6 M15.9 31.1 l2.6 2.6 M26.3 39.5 l2.6 2.6 M19.0 28.0 l2.6 2.6 M29.4 36.4 l2.6 2.6 M22.2 24.8 l2.6 2.6 M32.6 33.2 l2.6 2.6 M25.3 21.7 l2.6 2.6 M35.7 30.1 l2.6 2.6 M28.5 18.5 l2.6 2.6 M38.9 26.9 l2.6 2.6 M31.6 15.4 l2.6 2.6 M42.0 23.8 l2.6 2.6 M34.8 12.2 l2.6 2.6 M45.2 20.6 l2.6 2.6 M37.9 9.1 l2.6 2.6 M48.3 17.5 l2.6 2.6" stroke="#e6e6e6" stroke-width="1.3"/><path d="M12.4 45.6 L49.4 8.6" stroke="#e6e6e6" stroke-width="1.6"/><circle cx="12.4" cy="45.6" r="2.5" fill="#e6e6e6"/><circle cx="49.4" cy="8.6" r="2.5" fill="#e6e6e6"/><path d="M30.9 16.3 Q22 15.5 17.5 20" fill="none" stroke="#d9c3e8" stroke-width="2"/><path d="M14.5 22.5 L15.5 16.5 L20.5 20.5Z" fill="#d9c3e8"/><path d="M40.8 27.6 Q41.5 33 38.6 37.9" fill="none" stroke="#d9c3e8" stroke-width="2"/></svg>
<svg class="a" style="left:12.5px;top:869px;" width="61" height="54" viewBox="0 0 61 54"><path d="M9.1 19 L15.5 12.3 L36.3 12.6 L51.7 34.4 L44.3 41.4 L22.4 41.4Z" fill="#d9c3e8" stroke="#3a3046" stroke-width="1.1" stroke-linejoin="round"/><path d="M9.1 19 L30.1 19.2 L36.3 12.6 M30.1 19.2 L44.3 41.4" fill="none" stroke="#3a3046" stroke-width="1.1"/><path d="M43.2 7.5 L49 4.1 L49 11Z M47 7.5 H51.7" fill="#d9c3e8" stroke="#d9c3e8" stroke-width="1.6"/></svg>
<svg class="a" style="left:12.5px;top:922.9px;" width="61" height="54" viewBox="0 0 61 54"><path d="M13 43.5 L29 41.5 L30.5 23 L42 24 L53 15" fill="none" stroke="#e6e6e6" stroke-width="1.6"/><g fill="#d9c3e8"><circle cx="13" cy="43.5" r="3"/><circle cx="29" cy="41.5" r="3"/><circle cx="30.5" cy="23" r="3"/><circle cx="42" cy="24" r="3"/><circle cx="53" cy="15" r="3"/></g></svg>
<div class="a" style="left:1178px;top:41px;width:740.75px;height:83.6px;border-radius:7px;overflow:hidden;background:#a9a9a9">
<div class="a" style="left:0.00px;top:0.00px;width:740.75px;height:38.75px;background:#b3b3b3;border-radius:0;"></div>
<div class="a" style="left:0.00px;top:38.75px;width:740.75px;height:31.50px;background:#a1a1a1;border-radius:0;"></div>
</div>
<div class="a" style="left:1190.00px;top:45.25px;width:48.70px;height:30.45px;background:#3d3d3d;border-radius:6px;"></div>
<svg class="a" style="left:1190px;top:45.25px;" width="49" height="30" viewBox="0 0 49 30"><g fill="#d0d0d0"><rect x="8" y="3.5" width="8" height="4.5"/><rect x="14" y="12" width="10" height="4.5"/><rect x="14" y="19.5" width="10" height="4.5"/></g><path d="M11 8 V22 H14 M11 14 H14" fill="none" stroke="#d0d0d0" stroke-width="1.4"/></svg>
<svg class="a" style="left:1224px;top:57.5px;" width="12" height="8" viewBox="0 0 12 8"><path d="M1 1 L5.5 5.5 L10 1" fill="none" stroke="#a8a8a8" stroke-width="1.4"/></svg>
<div class="a" style="left:1246.00px;top:45.25px;width:49.00px;height:30.45px;background:#3d3d3d;border-radius:6px;"></div>
<svg class="a" style="left:1246px;top:45.25px;" width="49" height="30" viewBox="0 0 49 30"><path d="M8 11 V24 H20" fill="none" stroke="#d0d0d0" stroke-width="1.4"/><path d="M10.5 8.5 V21.5 H22.5" fill="none" stroke="#d0d0d0" stroke-width="1.4"/><rect x="13.5" y="4.5" width="12" height="14" fill="#3d3d3d" stroke="#d0d0d0" stroke-width="1.6"/><path d="M15 17.5 L18.5 11 L21 15 L22.5 13.5 L24.5 17.5Z" fill="#d0d0d0"/><circle cx="22" cy="8.5" r="1.5" fill="#d0d0d0"/></svg>
<svg class="a" style="left:1280px;top:57.5px;" width="12" height="8" viewBox="0 0 12 8"><path d="M1 1 L5.5 5.5 L10 1" fill="none" stroke="#a8a8a8" stroke-width="1.4"/></svg>
<div class="a" style="left:1442.20px;top:45.25px;width:178.70px;height:30.45px;background:#242424;border-radius:6px;box-shadow:0 1px 0 #9a9a9a"></div>
<svg class="a" style="left:1450px;top:50px;" width="24" height="22" viewBox="0 0 24 22"><circle cx="13.5" cy="8.5" r="6" fill="none" stroke="#d0d0d0" stroke-width="1.6"/><path d="M9.5 13 L3 20" stroke="#d0d0d0" stroke-width="1.8"/></svg>
<div class="a" style="left:1820.60px;top:45.25px;width:47.90px;height:30.45px;background:#3d3d3d;border-radius:6px;"></div>
<svg class="a" style="left:1820.6px;top:45.25px;" width="48" height="30" viewBox="0 0 48 30"><path d="M5 3.5 H24 L16.5 13.5 V25 L13 20.5 V13.5 Z" fill="none" stroke="#d0d0d0" stroke-width="1.6" stroke-linejoin="round"/></svg>
<svg class="a" style="left:1854px;top:57.5px;" width="12" height="8" viewBox="0 0 12 8"><path d="M1 1 L5.5 5.5 L10 1" fill="none" stroke="#a8a8a8" stroke-width="1.4"/></svg>
<div class="a" style="left:1876.90px;top:45.25px;width:29.10px;height:30.45px;background:#d6d6d6;border-radius:6px;"></div>
<svg class="a" style="left:1876.9px;top:45.25px;" width="30" height="30" viewBox="0 0 30 30"><rect x="5.5" y="8" width="12" height="4" fill="none" stroke="#444" stroke-width="1.5"/><path d="M6.5 12 V22 H17.5 V12" fill="none" stroke="#444" stroke-width="1.5"/><rect x="10" y="14" width="4" height="2" fill="#444"/><circle cx="20.5" cy="7" r="5.5" fill="#111"/><path d="M20.5 4 V10 M17.5 7 H23.5" stroke="#fff" stroke-width="1.6"/></svg>
<svg class="a" style="left:1210px;top:84px;" width="30" height="28" viewBox="0 0 30 28"><rect x="2.5" y="2.5" width="23" height="6" fill="#e8e8e8" stroke="#333" stroke-width="1.6"/><path d="M4.5 8.5 V23.5 H23.5 V8.5" fill="#e8e8e8" stroke="#333" stroke-width="1.6"/><ellipse cx="14" cy="12.5" rx="2.5" ry="1.2" fill="#333"/></svg>
<div class="t" style="left:1245.5px;top:88.96px;font-size:18px;color:#000;">Scene Collection</div>
<div class="a" style="left:1178px;top:111px;width:740px;height:13.6px;overflow:hidden">
<svg class="a" style="left:62.700000000000045px;top:2.5px;" width="30" height="20" viewBox="0 0 30 20"><rect x="1" y="1" width="28" height="20" rx="4" fill="#8d8d8d" stroke="#6a6a6a" stroke-width="1"/><rect x="5" y="4" width="20" height="8" fill="#e8e8e8" stroke="#333" stroke-width="1.3"/></svg>
<div class="t" style="left:100px;top:8px;font-size:18px;color:#111">Collection</div>
<div class="a" style="left:40px;top:12px;width:10px;height:3px;background:#222;border-radius:2px"></div>
<div class="a" style="left:644px;top:7px;width:14px;height:10px;background:#222"></div>
<div class="a" style="left:673px;top:7px;width:16px;height:14px;border:2px solid #222;border-radius:8px"></div>
<div class="a" style="left:705px;top:7px;width:18px;height:10px;background:#222;border-radius:3px"></div>
</div>
<div class="a" style="left:1178px;top:127.5px;width:740.75px;height:891.3px;border-radius:7px;overflow:hidden;background:#b6b6b6">
<div class="a" style="left:0.00px;top:39.50px;width:44.00px;height:851.80px;background:#6a6a6a;border-radius:0;"></div>
<div class="a" style="left:55.90px;top:70.10px;width:673.40px;height:368.80px;background:#a9a9a9;border-radius:0 0 5px 5px;"></div>
<div class="a" style="left:55.90px;top:521.70px;width:673.40px;height:379.60px;background:#a9a9a9;border-radius:0;"></div>
<div class="a" style="left:55.90px;top:750.40px;width:673.40px;height:150.90px;background:#939393;border-radius:0;"></div>
<div class="a" style="left:2.90px;top:53.00px;width:41.10px;height:41.10px;background:#8c8c8c;border-radius:6px 0 0 6px;box-shadow:0 1px 0 #5e5e5e"></div>
<div class="a" style="left:2.90px;top:107.70px;width:41.10px;height:41.05px;background:#8c8c8c;border-radius:6px 0 0 6px;box-shadow:0 1px 0 #5e5e5e"></div>
<div class="a" style="left:2.90px;top:150.70px;width:41.10px;height:41.00px;background:#8c8c8c;border-radius:6px 0 0 6px;box-shadow:0 1px 0 #5e5e5e"></div>
<div class="a" style="left:2.90px;top:193.70px;width:41.10px;height:41.00px;background:#8c8c8c;border-radius:6px 0 0 6px;box-shadow:0 1px 0 #5e5e5e"></div>
<div class="a" style="left:2.90px;top:236.60px;width:41.10px;height:41.10px;background:#8c8c8c;border-radius:6px 0 0 6px;box-shadow:0 1px 0 #5e5e5e"></div>
<div class="a" style="left:2.90px;top:279.60px;width:41.10px;height:41.00px;background:#8c8c8c;border-radius:6px 0 0 6px;box-shadow:0 1px 0 #5e5e5e"></div>
<div class="a" style="left:2.90px;top:334.20px;width:41.10px;height:41.00px;background:#8c8c8c;border-radius:6px 0 0 6px;box-shadow:0 1px 0 #5e5e5e"></div>
<div class="a" style="left:2.90px;top:388.90px;width:41.10px;height:41.00px;background:#8c8c8c;border-radius:6px 0 0 6px;box-shadow:0 1px 0 #5e5e5e"></div>
<div class="a" style="left:2.90px;top:431.90px;width:41.10px;height:41.00px;background:#8c8c8c;border-radius:6px 0 0 6px;box-shadow:0 1px 0 #5e5e5e"></div>
<div class="a" style="left:2.90px;top:474.80px;width:41.10px;height:41.10px;background:#8c8c8c;border-radius:6px 0 0 6px;box-shadow:0 1px 0 #5e5e5e"></div>
<div class="a" style="left:2.90px;top:517.80px;width:41.10px;height:41.00px;background:#8c8c8c;border-radius:6px 0 0 6px;box-shadow:0 1px 0 #5e5e5e"></div>
<div class="a" style="left:2.90px;top:561.90px;width:41.10px;height:40.40px;background:#c0c0c0;border-radius:6px 0 0 6px;box-shadow:0 1px 0 #5e5e5e"></div>
<div class="a" style="left:2.90px;top:604.20px;width:41.10px;height:41.40px;background:#8c8c8c;border-radius:6px 0 0 6px;box-shadow:0 1px 0 #5e5e5e"></div>
</div>
<div class="a" style="left:1190.30px;top:132.00px;width:48.45px;height:30.50px;background:#3d3d3d;border-radius:6px;"></div>
<svg class="a" style="left:1190.3px;top:132px;" width="49" height="31" viewBox="0 0 49 31"><rect x="7.7" y="4.6" width="21.7" height="9.1" rx="4.55" fill="#e0e0e0"/><rect x="7.7" y="17" width="21.7" height="9.1" rx="4.55" fill="#e0e0e0"/><path d="M16.7 6.2 H24.8 A3 3 0 0 1 24.8 12.1 H16.7Z" fill="#3d3d3d"/><path d="M21.7 18.6 H24.8 A3 3 0 0 1 24.8 24.5 H21.7Z" fill="#3d3d3d"/></svg>
<svg class="a" style="left:1223.5px;top:145.5px;" width="12" height="8" viewBox="0 0 12 8"><path d="M1 1 L5.5 5.5 L10 1" fill="none" stroke="#a0a0a0" stroke-width="1.3"/></svg>
<div class="a" style="left:1461.40px;top:132.00px;width:179.30px;height:30.50px;background:#242424;border-radius:6px;box-shadow:0 1px 0 #9a9a9a"></div>
<svg class="a" style="left:1469px;top:137px;" width="24" height="22" viewBox="0 0 24 22"><circle cx="13.5" cy="8.5" r="6" fill="none" stroke="#d0d0d0" stroke-width="1.6"/><path d="M9.5 13 L3 20" stroke="#d0d0d0" stroke-width="1.8"/></svg>
<div class="a" style="left:1876.30px;top:132.00px;width:30.50px;height:30.80px;background:#3d3d3d;border-radius:6px;"></div>
<svg class="a" style="left:1885px;top:144.5px;" width="14" height="8" viewBox="0 0 14 8"><path d="M1 1 L6 6 L11 1" fill="none" stroke="#a8a8a8" stroke-width="1.4"/></svg>
<svg class="a" style="left:1183px;top:180.5px;" width="41" height="41" viewBox="0 0 41 41"><path d="M11.4 8.5 V20" stroke="#1e1e1e" stroke-width="4.4" stroke-linecap="round"/><path d="M11.4 8.5 V20" stroke="#e8e8e8" stroke-width="1.6"/><path d="M7.2 20.5 H15.6 V27.5 Q15.6 31 11.4 31 Q7.2 31 7.2 27.5Z" fill="#e8e8e8" stroke="#1e1e1e" stroke-width="1.9" stroke-linejoin="round"/><path d="M18.3 8.3 Q16.8 16 21.2 17.2 V29.6 Q21.2 31.2 24.1 31.2 Q27 31.2 27 29.6 V17.2 Q31.4 16 29.9 8.3 L26.6 8.3 V12.5 Q24.1 14 21.6 12.5 V8.3Z" fill="#e8e8e8" stroke="#1e1e1e" stroke-width="1.9" stroke-linejoin="round"/><circle cx="24.1" cy="28.3" r="1" fill="#1e1e1e"/></svg>
<svg class="a" style="left:1183px;top:235.2px;" width="41" height="41" viewBox="0 0 41 41"><path d="M7.3 13.5 Q7.3 12.7 8.3 12.7 H13.8 V10.5 H19.8 V12.7 H29.6 Q30.6 12.7 30.6 13.7 V29.5 Q30.6 30.5 29.6 30.5 H8.3 Q7.3 30.5 7.3 29.5Z" fill="#e8e8e8" stroke="#1e1e1e" stroke-width="1.9" stroke-linejoin="round"/><rect x="24.4" y="8.9" width="4.6" height="2.6" fill="#e8e8e8" stroke="#1e1e1e" stroke-width="1.4"/><rect x="10" y="16.6" width="13" height="8.6" fill="#777" stroke="#1e1e1e" stroke-width="1.3"/><path d="M10 19.5 H23 M10 22.3 H23" stroke="#1e1e1e" stroke-width="1.3"/><circle cx="26.6" cy="18.3" r="1.2" fill="#1e1e1e"/><circle cx="26.6" cy="25" r="1.2" fill="#1e1e1e"/></svg>
<svg class="a" style="left:1183px;top:278.2px;" width="41" height="41" viewBox="0 0 41 41"><rect x="6.8" y="8.5" width="23.8" height="13" rx="2" fill="#e8e8e8" stroke="#1e1e1e" stroke-width="1.9"/><rect x="10.7" y="16.5" width="15.8" height="15.6" fill="#9a9a9a" stroke="#1e1e1e" stroke-width="1.9"/><path d="M13.5 29 L16.5 24.3 L19.5 29Z" fill="none" stroke="#1e1e1e" stroke-width="1.4"/><circle cx="21.8" cy="21" r="1" fill="#1e1e1e"/></svg>
<svg class="a" style="left:1183px;top:321.2px;" width="41" height="41" viewBox="0 0 41 41"><path d="M6.8 15.5 V32 H23.5 V29" fill="#e8e8e8" stroke="#1e1e1e" stroke-width="1.9"/><path d="M10.2 12 V28.5 H26.8 V25" fill="#e8e8e8" stroke="#1e1e1e" stroke-width="1.9"/><rect x="13.7" y="8.2" width="16.7" height="16.6" fill="#e8e8e8" stroke="#1e1e1e" stroke-width="1.9"/><path d="M16 22.8 L20.5 13.5 L24.5 21 L26 19 L28.2 22.8Z" fill="#2a2a2a"/><circle cx="25.6" cy="12.7" r="1.8" fill="#2a2a2a"/></svg>
<svg class="a" style="left:1183px;top:364.1px;" width="41" height="41" viewBox="0 0 41 41"><path d="M12.8 8.2 Q14.2 8.2 15 9.6 L20 19 A7.5 7.5 0 0 0 18 27.2 Q16.5 27.8 13 27.8 Q6.2 27.8 6.2 22.5 Q6.2 21 7 19.5 L10.6 9.6 Q11.4 8.2 12.8 8.2Z" fill="#e8e8e8" stroke="#1e1e1e" stroke-width="1.9" stroke-linejoin="round"/><circle cx="26.7" cy="12.2" r="3.7" fill="#e8e8e8" stroke="#1e1e1e" stroke-width="1.6"/><circle cx="23.3" cy="24.2" r="7.1" fill="#e8e8e8" stroke="#1e1e1e" stroke-width="1.9"/><circle cx="23.3" cy="24.2" r="4" fill="#6a6a6a" stroke="#1e1e1e" stroke-width="1.5"/><path d="M21.3 22.8 L23 21.3" stroke="#ddd" stroke-width="1.2"/></svg>
<svg class="a" style="left:1183px;top:407.1px;" width="41" height="41" viewBox="0 0 41 41"><circle cx="18.6" cy="19.8" r="10.6" fill="#e07a86" stroke="#1e1e1e" stroke-width="1.9"/><path d="M12 12.5 Q16 14 14 18.5 Q11.5 22 14.5 25.5 M18 9.5 Q20.5 13.5 25.5 12.8 Q23 18 26 20 M17.5 30.2 Q19.5 25.5 24.5 26.5 Q27.5 24 29 22" fill="none" stroke="#1e1e1e" stroke-width="1.6"/><path d="M5.8 31.5 L9 28.5 M28.5 11 L31.5 8" stroke="#e07a86" stroke-width="2.2"/><path d="M5.8 31.5 L9 28.5 M28.5 11 L31.5 8" stroke="#1e1e1e" stroke-width="0.8"/></svg>
<svg class="a" style="left:1183px;top:461.7px;" width="41" height="41" viewBox="0 0 41 41"><rect x="7.2" y="9.6" width="23" height="6.9" fill="#333" stroke="#1e1e1e" stroke-width="1.2"/><rect x="8.7" y="11.1" width="20" height="3.9" fill="none" stroke="#f0f0f0" stroke-width="1.3"/><path d="M9 16.5 V32 H28.4 V16.5" fill="#777" stroke="#1e1e1e" stroke-width="3"/><path d="M9 16.5 V32 H28.4 V16.5" fill="none" stroke="#f0f0f0" stroke-width="1.2"/><rect x="14.8" y="20.6" width="7.2" height="3" rx="1.5" fill="#f0f0f0" stroke="#1e1e1e" stroke-width="0.8"/></svg>
<svg class="a" style="left:1183px;top:516.4px;" width="41" height="41" viewBox="0 0 41 41"><rect x="10.7" y="13.5" width="15.8" height="15.1" fill="#e89a5a" stroke="#1e1e1e" stroke-width="1.6"/><path d="M6.5 14 V9.3 H11.5 M25.5 9.3 H30.1 V14 M30.1 28.3 V32.8 H25.5 M11.5 32.8 H6.5 V28.3" fill="none" stroke="#1e1e1e" stroke-width="3.4"/><path d="M6.5 14 V9.3 H11.5 M25.5 9.3 H30.1 V14 M30.1 28.3 V32.8 H25.5 M11.5 32.8 H6.5 V28.3" fill="none" stroke="#c8a888" stroke-width="1.1"/></svg>
<svg class="a" style="left:1183px;top:559.4px;" width="41" height="41" viewBox="0 0 41 41"><path d="M22.5 9 Q27 7.3 30.3 10.2 L25.8 13.5 L26.8 17 L30.8 15.5 Q31.3 20.5 26.5 22 Q24 22.7 22 21.6 L11.5 31 Q9 33.3 6.8 31 Q4.8 28.6 7.2 26.5 L17.8 17 Q16.8 11.5 22.5 9Z" fill="#8cb4e8" stroke="#1e1e1e" stroke-width="1.9" stroke-linejoin="round"/></svg>
<svg class="a" style="left:1183px;top:602.3px;" width="41" height="41" viewBox="0 0 41 41"><path d="M26.5 11.5 A10 10 0 1 0 26.8 29" fill="none" stroke="#1e1e1e" stroke-width="4.6" stroke-linecap="round"/><path d="M26.5 11.5 A10 10 0 1 0 26.8 29" fill="none" stroke="#8cb4e8" stroke-width="1.8" stroke-linecap="round"/><circle cx="18.4" cy="20.8" r="5.1" fill="#8cc0f5" stroke="#1e1e1e" stroke-width="1.9"/><circle cx="26.5" cy="13.1" r="3.5" fill="#8cb4e8" stroke="#1e1e1e" stroke-width="1.6"/></svg>
<svg class="a" style="left:1183px;top:645.3px;" width="41" height="41" viewBox="0 0 41 41"><path d="M8.5 28 A9.4 9.4 0 0 0 22.5 30 L30.5 14 Q32 10 28 10.5 L12.5 16 A9.4 9.4 0 0 0 8.5 28Z" fill="#8cb4e8" stroke="#1e1e1e" stroke-width="1.9" stroke-linejoin="round"/><circle cx="16.3" cy="23.2" r="6" fill="#8cb4e8" stroke="#1e1e1e" stroke-width="1.5"/><circle cx="16.3" cy="23.2" r="1.7" fill="#1e1e1e"/><circle cx="24.4" cy="14.8" r="1.7" fill="#dde8f5"/></svg>
<svg class="a" style="left:1183px;top:689.4px;" width="41" height="41" viewBox="0 0 41 41"><path d="M12.8 11 H20 Q27.5 11 27.5 19.5 Q27.5 28 19 28 H11" fill="none" stroke="#1e1e1e" stroke-width="4.6"/><path d="M12.8 11 H20 Q27.5 11 27.5 19.5 Q27.5 28 19 28 H11" fill="none" stroke="#3cc8a0" stroke-width="2"/><rect x="9" y="6.8" width="7.6" height="7.6" fill="#3cc8a0" stroke="#1e1e1e" stroke-width="1.9"/><rect x="5.3" y="24.2" width="7.6" height="7.6" fill="#3cc8a0" stroke="#1e1e1e" stroke-width="1.9"/><rect x="11.3" y="9.1" width="3" height="3" fill="#1e1e1e"/><rect x="7.6" y="26.5" width="3" height="3" fill="#1e1e1e"/></svg>
<svg class="a" style="left:1183px;top:731.7px;" width="41" height="41" viewBox="0 0 41 41"><circle cx="18.2" cy="20.5" r="11.3" fill="#e67a86" stroke="#1e1e1e" stroke-width="1.9"/><path d="M19.5 11 Q26.5 12.5 27 20 L19.5 21Z" fill="#8c8c8c" stroke="#1e1e1e" stroke-width="1.4" stroke-linejoin="round"/><path d="M9.5 22 L16.5 24 L16 28.5 Q11.5 27.5 9.5 22Z" fill="#8c8c8c" stroke="#1e1e1e" stroke-width="1.4" stroke-linejoin="round"/></svg>
<svg class="a" style="left:1245.5px;top:174.5px;" width="17" height="10" viewBox="0 0 17 10"><path d="M1 1 L8 8 L15 1" fill="none" stroke="#444" stroke-width="1.35"/></svg>
<div class="t" style="left:1268.0px;top:168.57px;font-size:20px;color:#000;">Shape</div>
<svg class="a" style="left:1878.3px;top:175.4px;" width="18" height="9" viewBox="0 0 18 9"><rect x="1.3" y="2.2" width="2" height="1.2" fill="#555" opacity="0.7"/><rect x="0.8" y="0.8" width="2" height="2" fill="#fff"/><rect x="1.3" y="5.8" width="2" height="1.2" fill="#555" opacity="0.7"/><rect x="0.8" y="4.4" width="2" height="2" fill="#fff"/><rect x="5.4" y="2.2" width="2" height="1.2" fill="#555" opacity="0.7"/><rect x="4.9" y="0.8" width="2" height="2" fill="#fff"/><rect x="5.4" y="5.8" width="2" height="1.2" fill="#555" opacity="0.7"/><rect x="4.9" y="4.4" width="2" height="2" fill="#fff"/><rect x="9.5" y="2.2" width="2" height="1.2" fill="#555" opacity="0.7"/><rect x="9.0" y="0.8" width="2" height="2" fill="#fff"/><rect x="9.5" y="5.8" width="2" height="1.2" fill="#555" opacity="0.7"/><rect x="9.0" y="4.4" width="2" height="2" fill="#fff"/><rect x="13.6" y="2.2" width="2" height="1.2" fill="#555" opacity="0.7"/><rect x="13.1" y="0.8" width="2" height="2" fill="#fff"/><rect x="13.6" y="5.8" width="2" height="1.2" fill="#555" opacity="0.7"/><rect x="13.1" y="4.4" width="2" height="2" fill="#fff"/></svg>
<div class="a" style="left:1246.20px;top:210.30px;width:648.40px;height:30.20px;background:#3d3d3d;border-radius:6px;"></div>
<div class="a" style="left:1569.60px;top:210.30px;width:325.00px;height:30.20px;background:#5680c2;border-radius:0 6px 6px 0;border:1px solid #3f5f94;border-left:none"></div>
<div class="t" style="left:1207.5px;width:400px;text-align:center;top:216.06px;font-size:18px;color:#f0f0f0;">2D</div>
<div class="t" style="left:1531.5px;width:400px;text-align:center;top:216.06px;font-size:18px;color:#ffffff;">3D</div>
<div class="t" style="right:433.3px;top:253.96px;font-size:18px;color:#000;text-align:right;">Resolution Preview U</div>
<div class="a" style="left:1500.60px;top:248.90px;width:362.70px;height:29.30px;background:#d8d8d8;border-radius:6px;box-shadow:0 1px 0 #8c8c8c"></div>
<div class="t" style="left:1482.0px;width:400px;text-align:center;top:253.96px;font-size:18px;color:#000;">12</div>
<div class="t" style="right:433.3px;top:288.36px;font-size:18px;color:#000;text-align:right;">Render U</div>
<div class="a" style="left:1500.60px;top:283.30px;width:362.70px;height:28.90px;background:#d8d8d8;border-radius:6px;box-shadow:0 1px 0 #8c8c8c"></div>
<div class="t" style="left:1482.0px;width:400px;text-align:center;top:288.36px;font-size:18px;color:#000;">0</div>
<div class="a" style="left:1877.00px;top:294.75px;width:6.00px;height:6.00px;background:#222;border-radius:3px;"></div>
<div class="t" style="right:433.3px;top:333.06px;font-size:18px;color:#000;text-align:right;">Twist Method</div>
<div class="a" style="left:1500.60px;top:328.00px;width:362.70px;height:30.80px;background:#3d3d3d;border-radius:6px;box-shadow:0 1px 0 #8c8c8c"></div>
<div class="t" style="left:1511.5px;top:333.06px;font-size:18px;color:#eaeaea;">Minimum</div>
<svg class="a" style="left:1847px;top:341px;" width="13" height="8" viewBox="0 0 13 8"><path d="M1 1 L5.5 5.5 L10 1" fill="none" stroke="#a8a8a8" stroke-width="1.4"/></svg>
<div class="a" style="left:1877.00px;top:340.40px;width:6.00px;height:6.00px;background:#222;border-radius:3px;"></div>
<div class="t" style="right:433.3px;top:367.96px;font-size:18px;color:#000;text-align:right;">Smooth</div>
<div class="a" style="left:1500.60px;top:362.90px;width:362.70px;height:30.10px;background:#d8d8d8;border-radius:6px;box-shadow:0 1px 0 #8c8c8c"></div>
<div class="t" style="left:1482.0px;width:400px;text-align:center;top:367.96px;font-size:18px;color:#000;">0.00</div>
<div class="a" style="left:1877.00px;top:374.95px;width:6.00px;height:6.00px;background:#222;border-radius:3px;"></div>
<div class="t" style="right:433.3px;top:417.36px;font-size:18px;color:#000;text-align:right;">Fill Mode</div>
<div class="a" style="left:1500.60px;top:412.30px;width:362.70px;height:30.50px;background:#3d3d3d;border-radius:6px;box-shadow:0 1px 0 #8c8c8c"></div>
<div class="t" style="left:1511.5px;top:417.36px;font-size:18px;color:#eaeaea;">Full</div>
<svg class="a" style="left:1847px;top:425.3px;" width="13" height="8" viewBox="0 0 13 8"><path d="M1 1 L5.5 5.5 L10 1" fill="none" stroke="#a8a8a8" stroke-width="1.4"/></svg>
<div class="a" style="left:1877.00px;top:424.55px;width:6.00px;height:6.00px;background:#222;border-radius:3px;"></div>
<div class="t" style="right:433.3px;top:468.06px;font-size:18px;color:#000;text-align:right;">Curve Deform</div>
<div class="a" style="left:1500.40px;top:466.10px;width:22.20px;height:22.80px;background:#5680c2;border-radius:5px;border:1px solid #3f5f94"></div>
<svg class="a" style="left:1500.4px;top:466.1px;" width="23" height="23" viewBox="0 0 23 23"><path d="M5.5 11.5 L9.5 15.5 L17.5 6.5" fill="none" stroke="#fff" stroke-width="2.4"/></svg>
<div class="t" style="left:1527.0px;top:467.96px;font-size:18px;color:#000;">Radius</div>
<div class="a" style="left:1877.00px;top:474.50px;width:6.00px;height:6.00px;background:#222;border-radius:3px;"></div>
<div class="a" style="left:1500.40px;top:497.00px;width:22.20px;height:22.80px;background:#3d3d3d;border-radius:5px;"></div>
<div class="t" style="left:1527.0px;top:498.86px;font-size:18px;color:#000;">Stretch</div>
<div class="a" style="left:1877.00px;top:505.40px;width:6.00px;height:6.00px;background:#222;border-radius:3px;"></div>
<div class="a" style="left:1500.40px;top:527.80px;width:22.20px;height:22.80px;background:#3d3d3d;border-radius:5px;"></div>
<div class="t" style="left:1527.0px;top:529.66px;font-size:18px;color:#000;">Bounds Clamp</div>
<div class="a" style="left:1877.00px;top:536.20px;width:6.00px;height:6.00px;background:#222;border-radius:3px;"></div>
<svg class="a" style="left:1250px;top:581px;" width="10" height="17" viewBox="0 0 10 17"><path d="M1 1 L8 8 L1 15" fill="none" stroke="#444" stroke-width="1.35"/></svg>
<div class="t" style="left:1268.0px;top:578.97px;font-size:20px;color:#000;">Texture Space</div>
<svg class="a" style="left:1878.3px;top:585.5px;" width="18" height="9" viewBox="0 0 18 9"><rect x="1.3" y="2.2" width="2" height="1.2" fill="#555" opacity="0.7"/><rect x="0.8" y="0.8" width="2" height="2" fill="#fff"/><rect x="1.3" y="5.8" width="2" height="1.2" fill="#555" opacity="0.7"/><rect x="0.8" y="4.4" width="2" height="2" fill="#fff"/><rect x="5.4" y="2.2" width="2" height="1.2" fill="#555" opacity="0.7"/><rect x="4.9" y="0.8" width="2" height="2" fill="#fff"/><rect x="5.4" y="5.8" width="2" height="1.2" fill="#555" opacity="0.7"/><rect x="4.9" y="4.4" width="2" height="2" fill="#fff"/><rect x="9.5" y="2.2" width="2" height="1.2" fill="#555" opacity="0.7"/><rect x="9.0" y="0.8" width="2" height="2" fill="#fff"/><rect x="9.5" y="5.8" width="2" height="1.2" fill="#555" opacity="0.7"/><rect x="9.0" y="4.4" width="2" height="2" fill="#fff"/><rect x="13.6" y="2.2" width="2" height="1.2" fill="#555" opacity="0.7"/><rect x="13.1" y="0.8" width="2" height="2" fill="#fff"/><rect x="13.6" y="5.8" width="2" height="1.2" fill="#555" opacity="0.7"/><rect x="13.1" y="4.4" width="2" height="2" fill="#fff"/></svg>
<svg class="a" style="left:1245.5px;top:625.5px;" width="17" height="10" viewBox="0 0 17 10"><path d="M1 1 L8 8 L15 1" fill="none" stroke="#444" stroke-width="1.35"/></svg>
<div class="t" style="left:1268.0px;top:619.97px;font-size:20px;color:#000;">Geometry</div>
<svg class="a" style="left:1878.3px;top:626.5px;" width="18" height="9" viewBox="0 0 18 9"><rect x="1.3" y="2.2" width="2" height="1.2" fill="#555" opacity="0.7"/><rect x="0.8" y="0.8" width="2" height="2" fill="#fff"/><rect x="1.3" y="5.8" width="2" height="1.2" fill="#555" opacity="0.7"/><rect x="0.8" y="4.4" width="2" height="2" fill="#fff"/><rect x="5.4" y="2.2" width="2" height="1.2" fill="#555" opacity="0.7"/><rect x="4.9" y="0.8" width="2" height="2" fill="#fff"/><rect x="5.4" y="5.8" width="2" height="1.2" fill="#555" opacity="0.7"/><rect x="4.9" y="4.4" width="2" height="2" fill="#fff"/><rect x="9.5" y="2.2" width="2" height="1.2" fill="#555" opacity="0.7"/><rect x="9.0" y="0.8" width="2" height="2" fill="#fff"/><rect x="9.5" y="5.8" width="2" height="1.2" fill="#555" opacity="0.7"/><rect x="9.0" y="4.4" width="2" height="2" fill="#fff"/><rect x="13.6" y="2.2" width="2" height="1.2" fill="#555" opacity="0.7"/><rect x="13.1" y="0.8" width="2" height="2" fill="#fff"/><rect x="13.6" y="5.8" width="2" height="1.2" fill="#555" opacity="0.7"/><rect x="13.1" y="4.4" width="2" height="2" fill="#fff"/></svg>
<div class="t" style="right:433.3px;top:666.76px;font-size:18px;color:#000;text-align:right;">Offset</div>
<div class="a" style="left:1500.60px;top:661.70px;width:362.70px;height:29.70px;background:#d8d8d8;border-radius:6px;box-shadow:0 1px 0 #8c8c8c"></div>
<div class="t" style="left:1482.0px;width:400px;text-align:center;top:666.76px;font-size:18px;color:#000;">0 m</div>
<div class="a" style="left:1877.00px;top:673.55px;width:6.00px;height:6.00px;background:#222;border-radius:3px;"></div>
<div class="t" style="right:433.3px;top:700.36px;font-size:18px;color:#000;text-align:right;">Extrude</div>
<div class="a" style="left:1500.60px;top:695.30px;width:362.70px;height:30.10px;background:#d8d8d8;border-radius:6px;box-shadow:0 1px 0 #8c8c8c"></div>
<div class="t" style="left:1482.0px;width:400px;text-align:center;top:700.36px;font-size:18px;color:#000;">0.25 m</div>
<div class="a" style="left:1877.00px;top:707.35px;width:6.00px;height:6.00px;background:#222;border-radius:3px;"></div>
<div class="t" style="right:433.3px;top:734.66px;font-size:18px;color:#000;text-align:right;">Taper Object</div>
<div class="a" style="left:1500.60px;top:729.60px;width:362.70px;height:29.50px;background:#232323;border-radius:6px;box-shadow:0 1px 0 #8c8c8c"></div>
<svg class="a" style="left:1506px;top:733px;" width="26" height="24" viewBox="0 0 26 24"><rect x="6.5" y="5" width="13" height="13" fill="#e8e8e8"/><path d="M1.5 6 V1.5 H6 M20 1.5 H24.5 V6 M24.5 18 V22.5 H20 M6 22.5 H1.5 V18" fill="none" stroke="#bbb" stroke-width="1.4"/></svg>
<svg class="a" style="left:1834px;top:732px;" width="26" height="26" viewBox="0 0 26 26"><path d="M16 10 L4 22 L3 24 L5 23 L17 11" fill="none" stroke="#ddd" stroke-width="1.5"/><path d="M14 8 L19 13" stroke="#ddd" stroke-width="2"/><path d="M17 7.5 Q20 2 23 4.5 Q25.5 7 19.5 10Z" fill="#ddd"/></svg>
<div class="t" style="right:433.3px;top:768.36px;font-size:18px;color:#000;text-align:right;">Taper Radius</div>
<div class="a" style="left:1500.60px;top:763.30px;width:362.70px;height:30.40px;background:#3d3d3d;border-radius:6px;box-shadow:0 1px 0 #8c8c8c"></div>
<div class="t" style="left:1511.5px;top:768.36px;font-size:18px;color:#eaeaea;">Override</div>
<svg class="a" style="left:1847px;top:776.3px;" width="13" height="8" viewBox="0 0 13 8"><path d="M1 1 L5.5 5.5 L10 1" fill="none" stroke="#a8a8a8" stroke-width="1.4"/></svg>
<div class="a" style="left:1877.00px;top:775.50px;width:6.00px;height:6.00px;background:#222;border-radius:3px;"></div>
<div class="a" style="left:1500.40px;top:801.10px;width:22.20px;height:22.80px;background:#7d7d7d;border-radius:5px;"></div>
<div class="t" style="left:1527.0px;top:802.96px;font-size:18px;color:#7a7a7a;">Map Taper</div>
<div class="a" style="left:1877.00px;top:809.50px;width:6.00px;height:6.00px;background:#a2a2a2;border-radius:3px;"></div>
<svg class="a" style="left:1266.5px;top:854px;" width="17" height="10" viewBox="0 0 17 10"><path d="M1 1 L8 8 L15 1" fill="none" stroke="#444" stroke-width="1.35"/></svg>
<div class="t" style="left:1289.0px;top:849.96px;font-size:18px;color:#000;">Bevel</div>
<div class="a" style="left:1246.10px;top:890.30px;width:648.50px;height:30.10px;background:#3d3d3d;border-radius:6px;"></div>
<div class="a" style="left:1246.10px;top:890.30px;width:215.00px;height:30.10px;background:#5680c2;border-radius:6px 0 0 6px;border:1px solid #3f5f94;border-right:none"></div>
<div class="a" style="left:1677.00px;top:892.00px;width:1.00px;height:27.00px;background:#4a4a4a;border-radius:0;"></div>
<div class="t" style="left:1153.6px;width:400px;text-align:center;top:896.16px;font-size:18px;color:#fff;">Round</div>
<div class="t" style="left:1369.0px;width:400px;text-align:center;top:896.16px;font-size:18px;color:#eaeaea;">Object</div>
<div class="t" style="left:1585.8px;width:400px;text-align:center;top:896.16px;font-size:18px;color:#eaeaea;">Profile</div>
<div class="t" style="right:433.3px;top:933.86px;font-size:18px;color:#000;text-align:right;">Depth</div>
<div class="a" style="left:1500.60px;top:928.80px;width:362.70px;height:29.40px;background:#d8d8d8;border-radius:6px;box-shadow:0 1px 0 #8c8c8c"></div>
<div class="t" style="left:1482.0px;width:400px;text-align:center;top:933.86px;font-size:18px;color:#000;">0 m</div>
<div class="a" style="left:1877.00px;top:940.50px;width:6.00px;height:6.00px;background:#222;border-radius:3px;"></div>
<div class="t" style="right:433.3px;top:967.96px;font-size:18px;color:#000;text-align:right;">Resolution</div>
<div class="a" style="left:1500.60px;top:962.90px;width:362.70px;height:29.40px;background:#d8d8d8;border-radius:6px;box-shadow:0 1px 0 #8c8c8c"></div>
<div class="t" style="left:1482.0px;width:400px;text-align:center;top:967.96px;font-size:18px;color:#000;">4</div>
<div class="a" style="left:1877.00px;top:974.60px;width:6.00px;height:6.00px;background:#222;border-radius:3px;"></div>
<div class="a" style="left:1400px;top:990px;width:500px;height:28.8px;overflow:hidden">
<div class="a" style="left:100.4px;top:9.9px;width:22.2px;height:22.8px;background:#3d3d3d;border-radius:5px"></div>
<div class="t" style="left:127px;top:12.76px;font-size:18px;color:#111">Fill Caps</div>
<div class="a" style="left:477px;top:18.3px;width:6px;height:6px;background:#222;border-radius:3px"></div>
</div>
<div class="a" style="left:12.40px;top:986.50px;width:48.10px;height:30.10px;background:#3d3d3d;border-radius:6px;"></div>
<svg class="a" style="left:12.4px;top:986.5px;" width="48" height="30" viewBox="0 0 48 30"><circle cx="18.2" cy="14.8" r="10.9" fill="#e8e8e8"/><path d="M22.6 8.2 L17.5 14.8 L21.9 20" fill="none" stroke="#3d3d3d" stroke-width="2.6" stroke-linecap="round"/></svg>
<svg class="a" style="left:45px;top:1000px;" width="12" height="8" viewBox="0 0 12 8"><path d="M1 1 L5.5 5 L10 1" fill="none" stroke="#999" stroke-width="1.4"/></svg>
<div class="a" style="left:68.50px;top:986.50px;width:204.20px;height:30.10px;background:#3d3d3d;border-radius:6px;"></div>
<div class="t" style="left:80.0px;top:991.76px;font-size:18px;color:#eaeaea;">Playback</div>
<svg class="a" style="left:163px;top:1000px;" width="12" height="8" viewBox="0 0 12 8"><path d="M1 1 L5.5 5 L10 1" fill="none" stroke="#999" stroke-width="1.4"/></svg>
<div class="t" style="left:190.0px;top:991.76px;font-size:18px;color:#eaeaea;">Keying</div>
<svg class="a" style="left:257px;top:1000px;" width="12" height="8" viewBox="0 0 12 8"><path d="M1 1 L5.5 5 L10 1" fill="none" stroke="#999" stroke-width="1.4"/></svg>
<div class="t" style="left:287.5px;top:991.86px;font-size:18px;color:#000;">View</div>
<div class="t" style="left:351.0px;top:991.86px;font-size:18px;color:#000;">Marker</div>
<div class="a" style="left:445.00px;top:986.50px;width:60.70px;height:30.10px;background:#808080;border-radius:6px;"></div>
<div class="a" style="left:445.00px;top:986.50px;width:29.30px;height:30.10px;background:#d8d8d8;border-radius:6px 0 0 6px;"></div>
<svg class="a" style="left:445px;top:986.5px;" width="30" height="30" viewBox="0 0 30 30"><circle cx="14.4" cy="14.4" r="6.4" fill="#111"/></svg>
<svg class="a" style="left:484px;top:1000px;" width="12" height="8" viewBox="0 0 12 8"><path d="M1 1 L5.5 5 L10 1" fill="none" stroke="#666" stroke-width="1.4"/></svg>
<div class="a" style="left:513.70px;top:986.50px;width:184.50px;height:30.10px;background:#d8d8d8;border-radius:6px;"></div>
<div class="a" style="left:543.50px;top:987.50px;width:0.80px;height:28.10px;background:#c2c2c2;border-radius:0;"></div>
<div class="a" style="left:574.50px;top:987.50px;width:0.80px;height:28.10px;background:#c2c2c2;border-radius:0;"></div>
<div class="a" style="left:605.40px;top:987.50px;width:0.80px;height:28.10px;background:#c2c2c2;border-radius:0;"></div>
<div class="a" style="left:636.30px;top:987.50px;width:0.80px;height:28.10px;background:#c2c2c2;border-radius:0;"></div>
<div class="a" style="left:667.30px;top:987.50px;width:0.80px;height:28.10px;background:#c2c2c2;border-radius:0;"></div>
<svg class="a" style="left:513.7px;top:986.5px;" width="185" height="30" viewBox="0 0 185 30"><g fill="#111">
<rect x="6.9" y="6.4" width="3.4" height="16"/><path d="M11.5 14.4 L20.7 7.1 V21.8Z"/>
<path d="M40.1 7.4 L47.1 14.4 L40.1 21.4 L33.1 14.4Z"/><path d="M47 14.4 L56.2 8.7 V20.8Z"/>
<path d="M68.8 14.4 L83.7 5.7 V23.1Z"/>
<path d="M98.6 5.7 L114.6 14.4 L98.6 23.1Z"/>
<path d="M127.2 8.7 L135.2 14.4 L127.2 20.8Z"/><path d="M143.3 7.4 L150.3 14.4 L143.3 21.4 L136.3 14.4Z"/>
<path d="M162.7 7.1 L173 14.4 L162.7 21.8Z"/><rect x="173.7" y="6.4" width="3.5" height="16"/>
</g></svg>
<div class="a" style="left:742.90px;top:986.50px;width:113.20px;height:30.10px;background:#d8d8d8;border-radius:6px;"></div>
<div class="t" style="left:599.4px;width:400px;text-align:center;top:991.86px;font-size:18px;color:#000;">1</div>
<div class="a" style="left:864.75px;top:986.50px;width:298.35px;height:30.10px;background:#d8d8d8;border-radius:6px;"></div>
<div class="a" style="left:894.75px;top:987.50px;width:0.80px;height:28.10px;background:#c2c2c2;border-radius:0;"></div>
<div class="a" style="left:1032.30px;top:987.50px;width:0.80px;height:28.10px;background:#c2c2c2;border-radius:0;"></div>
<svg class="a" style="left:864.75px;top:986.5px;" width="30" height="30" viewBox="0 0 30 30"><circle cx="14.75" cy="16.3" r="8.3" fill="none" stroke="#222" stroke-width="1.7"/><path d="M10.5 5.5 H19 M14.75 5.5 V8 M14.75 11.5 V16.5 H19.5 M21.5 10 L24 7.5" fill="none" stroke="#222" stroke-width="1.7"/></svg>
<div class="t" style="left:918.5px;top:991.86px;font-size:18px;color:#000;">Start</div>
<div class="t" style="left:1001.5px;top:991.86px;font-size:18px;color:#000;">1</div>
<div class="t" style="left:1057.0px;top:991.86px;font-size:18px;color:#000;">End</div>
<div class="t" style="left:1111.5px;top:991.86px;font-size:18px;color:#000;">250</div>
<svg class="a" style="left:18.2px;top:1024.6px;" width="18" height="24" viewBox="0 0 18 24"><rect x="1" y="1" width="15.5" height="21.5" rx="5" fill="none" stroke="#222" stroke-width="1.6"/><path d="M1 10 V6 Q1 1 6 1 H8.5 V10Z" fill="#222"/></svg>
<div class="t" style="left:52.0px;top:1025.96px;font-size:18px;color:#000;">Set 3D Cursor</div>
<svg class="a" style="left:368px;top:1024.6px;" width="18" height="24" viewBox="0 0 18 24"><rect x="1" y="1" width="15.5" height="21.5" rx="5" fill="none" stroke="#222" stroke-width="1.6"/><rect x="6.8" y="4.5" width="4" height="7.5" rx="2" fill="#222"/></svg>
<div class="t" style="left:402.0px;top:1025.96px;font-size:18px;color:#000;">Rotate View</div>
<svg class="a" style="left:718px;top:1024.6px;" width="18" height="24" viewBox="0 0 18 24"><rect x="1" y="1" width="15.5" height="21.5" rx="5" fill="none" stroke="#222" stroke-width="1.6"/><path d="M16.5 10 V6 Q16.5 1 11.5 1 H9 V10Z" fill="#222"/></svg>
<div class="t" style="left:752.0px;top:1025.96px;font-size:18px;color:#000;">Select</div>
<div class="t" style="right:13.5px;top:1025.96px;font-size:18px;color:#000;text-align:right;">3.2.0</div>
</body></html>
